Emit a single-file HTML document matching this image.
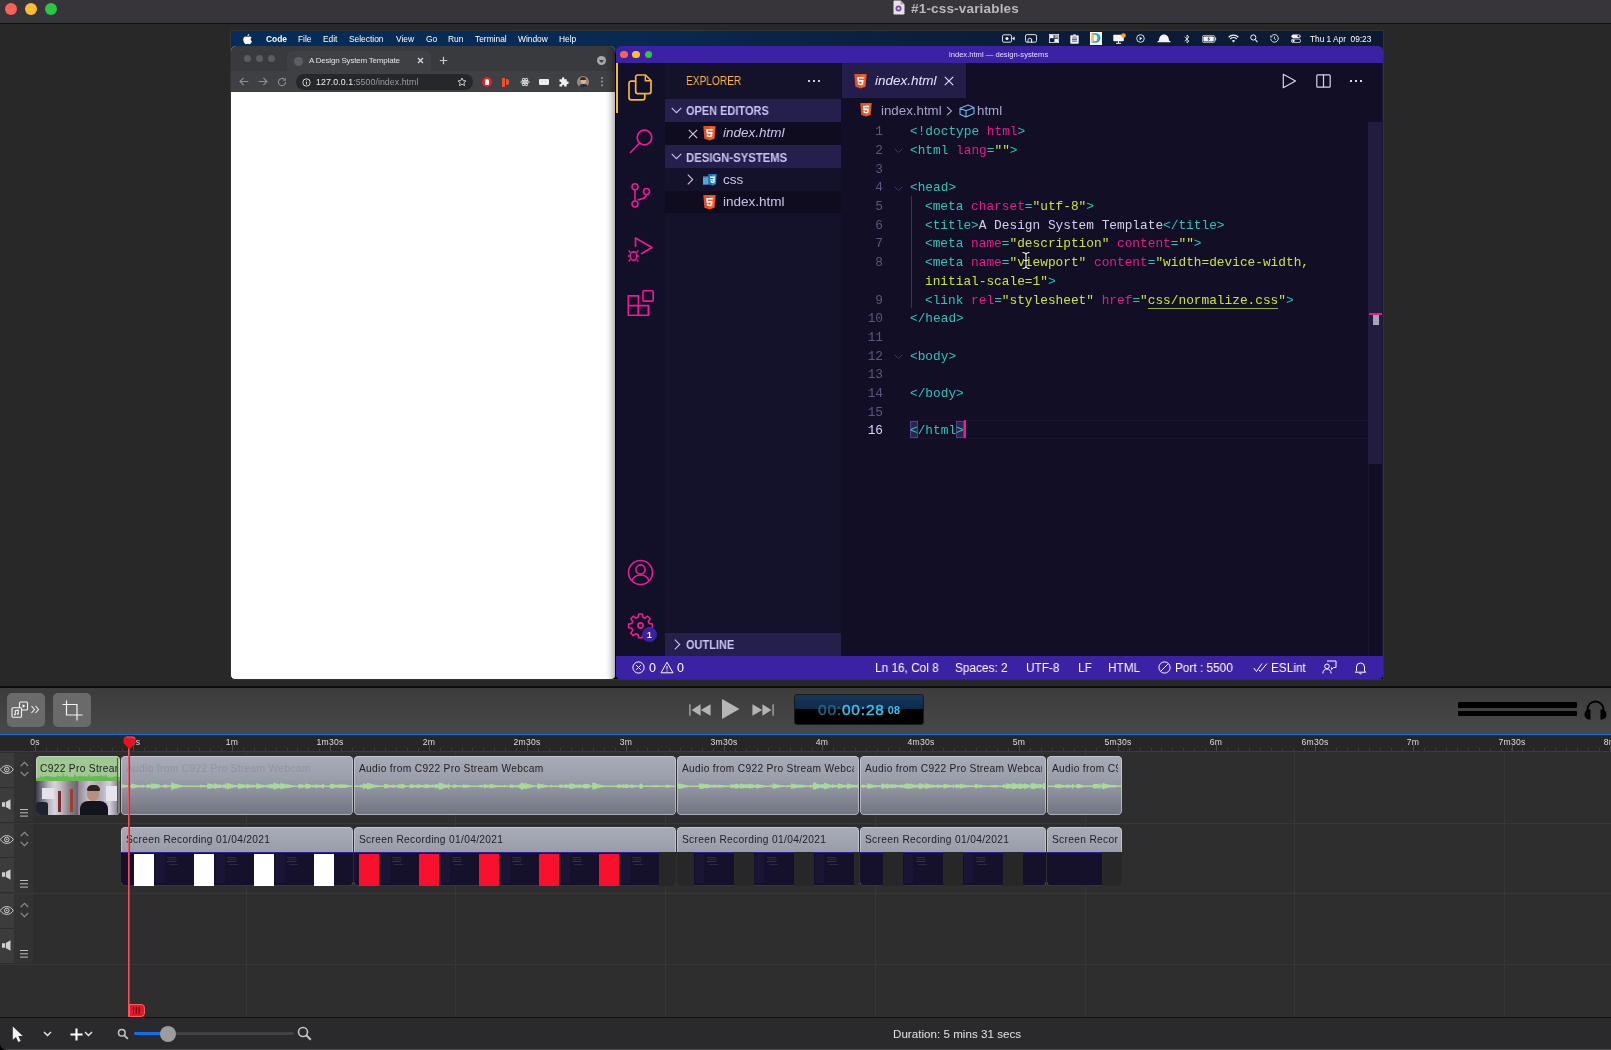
<!DOCTYPE html>
<html lang="en"><head><meta charset="utf-8"><title>#1-css-variables</title>
<style>
*{box-sizing:border-box;margin:0;padding:0}
html,body{width:1611px;height:1050px;overflow:hidden;background:#282828;font-family:"Liberation Sans",sans-serif;}
.a{position:absolute}
.t{position:absolute;white-space:pre;line-height:1;will-change:transform}
#titlebar{left:0;top:0;width:1611px;height:23px;background:#37343a}
#titleline{left:0;top:22.600px;width:1611px;height:1.300px;background:#101010}
.tl{width:12px;height:12px;border-radius:50%;top:3px}
#canvas{left:0;top:23.600px;width:1611px;height:662px;background:#282828}
/* screen */
#menubar{left:231px;top:31px;width:1152px;height:22px;background:linear-gradient(90deg,#052c5a 0%,#072a52 35%,#0a1f3c 60%,#0b1a30 100%)}
#menubar .t{color:#fff;font-size:8.400px;top:3.500px}
#chrome{left:231px;top:46px;width:384px;height:633px;background:#fff;border-radius:5px 5px 4px 4px;overflow:hidden}
#vscode{left:616px;top:46px;width:767px;height:633px;background:#110e25;border-radius:5px 5px 4px 4px;overflow:hidden}
.hd{font-size:12px;font-weight:bold;color:#c9c3f0;transform-origin:0 50%;transform:scaleX(.915)}
.row{font-size:13.5px;color:#c9c4ea}
.ln,.cd{font-family:"Liberation Mono",monospace;font-size:12.8px;line-height:18.69px}
.ln{width:30px;text-align:right}
.cd{color:#d3d0ee}
.ln,.cd{margin-top:2.700px}
.bc{font-size:13.300px;color:#a9a4cc}
.sb{font-size:12.500px;color:#fff;top:616px;transform-origin:0 50%;transform:scaleX(.945)}
/* lower */
#sep{left:0;top:686px;width:1611px;height:1.700px;background:#0c0c0c}
#toolbar{left:0;top:687.700px;width:1611px;height:46.300px;background:linear-gradient(180deg,#3c3c3c,#484848)}
#blueline{left:0;top:734px;width:1611px;height:1.6px;background:#0b6fe6}
#ruler{left:0;top:735px;width:1611px;height:17px;background:#262626}
#tracks{left:0;top:752px;width:1611px;height:265px;background:#2e2e2e}
#bottombar{left:0;top:1017px;width:1611px;height:33px;background:#2a292c;border-top:1px solid #111}
.rl{top:2.700px;font-size:8.600px;color:#dedede;text-align:center;letter-spacing:.200px}
.clip{border-radius:4.500px;background:linear-gradient(180deg,#a8acb7 0%,#9a9eaa 40%,#70747f 100%);overflow:hidden;box-shadow:inset 0 0 0 .8px rgba(215,218,225,.75)}
.ct{font-size:10.2px;color:#222224;letter-spacing:.33px;right:4.5px;overflow:hidden;height:13px}
</style></head><body>
<div id="titlebar" class="a">
<div class="a tl" style="left:5px;background:#fe5f57"></div>
<div class="a tl" style="left:25px;background:#febc2e"></div>
<div class="a tl" style="left:45px;background:#28c840"></div>
<svg class="a" style="left:892px;top:0px" width="14" height="16" viewBox="0 0 14 16"><path d="M1.5 1.5 a1 1 0 0 1 1-1 h6 l4 4 v9 a1 1 0 0 1-1 1 h-9 a1 1 0 0 1-1-1z" fill="#e4e4e6"/><path d="M8.5 .5 v4 h4z" fill="#aaa"/><circle cx="6.5" cy="8.5" r="3" fill="#7a4aa0"/><circle cx="6.5" cy="8.5" r="1.2" fill="#e8d8f0"/></svg>
<div class="t" style="left:911px;top:2px;font-size:13.500px;font-weight:bold;color:#bab8bd;letter-spacing:0.180px">#1-css-variables</div>
</div>
<div id="titleline" class="a"></div>
<div id="canvas" class="a"></div>
<div class="a" style="left:230px;top:30px;width:1154px;height:650px;background:#323232"></div><div class="a" style="left:231px;top:31px;width:1152px;height:648px;background:#000"></div>
<div id="menubar" class="a">
<svg class="a" style="left:12px;top:2.5px" width="9" height="11" viewBox="0 0 9 11"><path d="M6.2 0 C6.3 1 5.5 2.1 4.5 2.2 C4.3 1.2 5.2 .2 6.2 0z M4.5 2.8 C5.2 2.8 5.7 2.3 6.6 2.4 C7.3 2.4 8.1 2.8 8.6 3.6 C7.2 4.5 7.4 6.6 8.9 7.2 C8.5 8.4 7.6 10 6.7 10.2 C6 10.3 5.6 9.8 4.7 9.8 C3.8 9.8 3.4 10.3 2.7 10.2 C1.6 10 0.2 7.6 0.2 5.6 C0.2 3.6 1.5 2.5 2.7 2.5 C3.5 2.5 4 2.8 4.5 2.8z" fill="#fff"/></svg>
<div class="t" style="left:34.5px;font-weight:bold">Code</div>
<div class="t" style="left:66.5px">File</div>
<div class="t" style="left:91.5px">Edit</div>
<div class="t" style="left:118px">Selection</div>
<div class="t" style="left:164.5px">View</div>
<div class="t" style="left:194.5px">Go</div>
<div class="t" style="left:217px">Run</div>
<div class="t" style="left:243.5px">Terminal</div>
<div class="t" style="left:286.5px">Window</div>
<div class="t" style="left:328px">Help</div>
<div class="t" id="clock" style="left:1078.500px;font-size:8.300px;top:4px">Thu 1 Apr  09:23</div>
<svg class="a" style="left:770.5px;top:3px" width="13" height="9" viewBox="0 0 13 9"><rect x=".5" y=".8" width="9" height="7.400" rx="1.300" stroke="#f4f4f4" stroke-width=".9" fill="none"/><circle cx="5" cy="4.500" r="1.500" fill="#f4f4f4"/><path d="M10 4.500l2.600-2v4z" fill="#f4f4f4"/></svg>
<svg class="a" style="left:793.5px;top:3px" width="12" height="9" viewBox="0 0 12 9"><rect x=".5" y=".6" width="11" height="7.600" rx="1.500" stroke="#f4f4f4" stroke-width=".9" fill="none"/><path d="M3 8.500V6a1.800 1.800 0 0 1 3.600 0v2.500M6.600 8.500V5" stroke="#f4f4f4" stroke-width=".9" fill="none"/></svg>
<svg class="a" style="left:817.5px;top:3px" width="10" height="9" viewBox="0 0 10 9"><rect x=".4" y=".4" width="9.200" height="8.200" stroke="#f4f4f4" stroke-width=".8" fill="none"/><rect x="1" y="1" width="3.600" height="3.200" fill="#f4f4f4"/><rect x="5.400" y="4.800" width="3.600" height="3.200" fill="#f4f4f4"/><rect x="5.400" y="1" width="3.600" height="3.200" fill="#8fa0b8"/></svg>
<svg class="a" style="left:839px;top:2.500px" width="9" height="10" viewBox="0 0 9 10"><rect x=".3" y="1.300" width="8.400" height="8.400" rx=".8" fill="#f4f4f4"/><rect x="2.800" y=".2" width="3.400" height="2" rx=".5" fill="#f4f4f4" stroke="#0a2548" stroke-width=".4"/><path d="M2 4h5M2 5.600h5M2 7.200h5" stroke="#0a2548" stroke-width=".7"/></svg>
<div class="a" style="left:858.5px;top:.5px;width:12.500px;height:13px;background:#fbfbf6"></div>
<svg class="a" style="left:860px;top:2px" width="10" height="10" viewBox="0 0 10 10"><path d="M1.500 1h3a4 4 0 0 1 0 8h-3z" stroke="#1f9be8" stroke-width="1.700" fill="none"/><path d="M1.500 1v8" stroke="#f2c94c" stroke-width="1.700"/><path d="M6 2.300a4 4 0 0 1 0 5.400" stroke="#2bb673" stroke-width="1.500" fill="none"/></svg>
<svg class="a" style="left:882px;top:1.500px" width="14" height="11" viewBox="0 0 14 11"><rect x=".3" y="1.800" width="10.500" height="6.500" rx=".8" fill="#f4f4f4"/><path d="M5.500 8v2M3 10.300h5" stroke="#f4f4f4" stroke-width="1"/><circle cx="10.500" cy="2.500" r="2.300" fill="#f5a623"/></svg>
<svg class="a" style="left:904.5px;top:3px" width="9" height="9" viewBox="0 0 9 9"><circle cx="4.500" cy="4.500" r="3.800" stroke="#f4f4f4" stroke-width=".9" fill="none"/><path d="M3.600 2.800l2.700 1.700-2.700 1.700z" fill="#f4f4f4"/></svg>
<svg class="a" style="left:925.5px;top:3px" width="14" height="9" viewBox="0 0 14 9"><path d="M.3 8.200c0-1 .8-1.500 1.700-1.500C2 3 4 .5 7 .5s5 2.500 5 6.200c.9 0 1.700.5 1.700 1.500z" fill="#f4f4f4"/></svg>
<svg class="a" style="left:953.3px;top:2.500px" width="6" height="10" viewBox="0 0 6 10"><path d="M.6 2.700l4.400 4.400L3 9V1l2 1.900L.6 7.300" stroke="#f4f4f4" stroke-width=".8" fill="none" stroke-linejoin="round"/></svg>
<svg class="a" style="left:971.3px;top:3.500px" width="15" height="8" viewBox="0 0 15 8"><rect x=".4" y=".4" width="12.400" height="7.200" rx="1.600" stroke="#c9d0da" stroke-width=".8" fill="none"/><rect x="1.400" y="1.400" width="10.400" height="5.200" rx=".8" fill="#f4f4f4"/><path d="M13.600 2.600v2.800" stroke="#c9d0da" stroke-width="1.100"/><path d="M7.400 1.500L5.300 4.300h1.500L6 6.500l2.200-2.800H6.700z" fill="#0a2548"/></svg>
<svg class="a" style="left:996.8px;top:3px" width="11" height="9" viewBox="0 0 11 9"><path d="M.6 3.200a7 7 0 0 1 9.800 0M2.300 5a4.600 4.600 0 0 1 6.400 0" stroke="#f4f4f4" stroke-width="1.200" fill="none"/><path d="M3.900 6.700a2.300 2.300 0 0 1 3.200 0L5.500 8.400z" fill="#f4f4f4"/></svg>
<svg class="a" style="left:1018.8px;top:3px" width="8" height="9" viewBox="0 0 8 9"><circle cx="3.300" cy="3.500" r="2.600" stroke="#f4f4f4" stroke-width="1" fill="none"/><path d="M5.200 5.500l2.300 2.600" stroke="#f4f4f4" stroke-width="1.100"/></svg>
<svg class="a" style="left:1038.8px;top:3px" width="9" height="9" viewBox="0 0 9 9"><path d="M1.300 2.300A3.800 3.800 0 1 1 .7 4.800" stroke="#f4f4f4" stroke-width=".9" fill="none"/><path d="M4.500 2.500v2.300l1.300.9" stroke="#f4f4f4" stroke-width=".8" fill="none"/><path d="M.2 1.300l.5 2 1.900-.6" stroke="#f4f4f4" stroke-width=".7" fill="none"/></svg>
<svg class="a" style="left:1059.8px;top:3px" width="10" height="9" viewBox="0 0 10 9"><rect x=".4" y=".4" width="9.200" height="3.600" rx="1.800" fill="#f4f4f4"/><circle cx="7.500" cy="2.200" r="1.100" fill="#0a2548"/><rect x=".4" y="5" width="9.200" height="3.600" rx="1.800" stroke="#f4f4f4" stroke-width=".8" fill="none"/><circle cx="2.500" cy="6.800" r="1.200" fill="#f4f4f4"/></svg>

</div>
<div id="chrome" class="a">
<div class="a" style="left:0;top:0;width:384px;height:25px;background:#383a3e"></div>
<div class="a" style="left:0;top:25px;width:384px;height:21px;background:#3e4044"></div>
<div class="a" style="left:56px;top:5px;width:144px;height:21px;background:#3e4044;border-radius:5px 5px 0 0"></div>
<div class="a" style="left:13px;top:9px;width:7px;height:7px;border-radius:50%;background:#5a5c60"></div>
<div class="a" style="left:25px;top:9px;width:7px;height:7px;border-radius:50%;background:#5a5c60"></div>
<div class="a" style="left:37px;top:9px;width:7px;height:7px;border-radius:50%;background:#5a5c60"></div>
<div class="a" style="left:63px;top:10.5px;width:9px;height:9px;border-radius:50%;background:#5b5d61"></div>
<div class="t" style="left:77.500px;top:10.700px;font-size:8px;letter-spacing:-0.200px;color:#e3e3e5">A Design System Template</div>
<svg class="a" style="left:186px;top:11px" width="7" height="7" viewBox="0 0 7 7"><path d="M1 1l5 5M6 1l-5 5" stroke="#e0e0e0" stroke-width="1.1" fill="none"/></svg>
<svg class="a" style="left:208px;top:10px" width="9" height="9" viewBox="0 0 9 9"><path d="M4.5 .8v7.4M.8 4.5h7.4" stroke="#c8c9cc" stroke-width="1.2" fill="none"/></svg>
<div class="a" style="left:366px;top:10px;width:9px;height:9px;border-radius:50%;background:#a6a8ab"></div>
<svg class="a" style="left:368px;top:13.5px" width="5" height="3" viewBox="0 0 5 3"><path d="M0 0h5l-2.5 3z" fill="#383a3e"/></svg>
<!-- toolbar -->
<svg class="a" style="left:8px;top:31px" width="10" height="9" viewBox="0 0 10 9"><path d="M9.3 4.5H1.2M4.6 .9L1 4.5l3.6 3.6" stroke="#8d8f93" stroke-width="1.1" fill="none"/></svg>
<svg class="a" style="left:27px;top:31px" width="10" height="9" viewBox="0 0 10 9"><path d="M.7 4.5h8.1M5.4 .9L9 4.5 5.4 8.1" stroke="#8d8f93" stroke-width="1.1" fill="none"/></svg>
<svg class="a" style="left:46px;top:30.5px" width="10" height="10" viewBox="0 0 10 10"><path d="M8.6 5a3.6 3.6 0 1 1-1.1-2.6" stroke="#8d8f93" stroke-width="1.1" fill="none"/><path d="M8.9 .8v3H5.9z" fill="#8d8f93"/></svg>
<div class="a" style="left:65px;top:28px;width:177px;height:16px;border-radius:8px;background:#26272a"></div>
<svg class="a" style="left:71px;top:31.5px" width="9" height="9" viewBox="0 0 9 9"><circle cx="4.5" cy="4.5" r="3.7" stroke="#e6e6e6" stroke-width=".9" fill="none"/><path d="M4.5 4v2.6M4.5 2.4v.9" stroke="#e6e6e6" stroke-width=".9"/></svg>
<div class="t" style="left:85px;top:31.800px;font-size:8.800px;color:#f0f0f0;letter-spacing:0.050px">127.0.0.1<span style="color:#9a9ca0">:5500/index.html</span></div>
<svg class="a" style="left:226px;top:31px" width="10" height="10" viewBox="0 0 10 10"><path d="M5 1l1.2 2.6 2.8.3-2.1 1.9.6 2.8L5 7.2 2.5 8.6l.6-2.8L1 3.9l2.8-.3z" stroke="#d8d8d8" stroke-width=".9" fill="none" stroke-linejoin="round"/></svg>
<div class="a" style="left:251px;top:31px;width:10px;height:10px;border-radius:50%;background:#e8202a"></div>
<div class="a" style="left:254px;top:33px;width:4px;height:6px;border-radius:2px 2px 1px 1px;background:#fff"></div>
<div class="a" style="left:271px;top:31.5px;width:2.5px;height:9px;background:#f0502a"></div>
<div class="a" style="left:275px;top:33px;width:3px;height:6px;background:#f0502a;border-radius:0 2px 2px 0"></div>
<svg class="a" style="left:289px;top:31px" width="10" height="10" viewBox="0 0 10 10"><circle cx="5" cy="5" r="1" fill="#e8e8e8"/><ellipse cx="5" cy="5" rx="4.3" ry="1.7" stroke="#e8e8e8" stroke-width=".8" fill="none"/><ellipse cx="5" cy="5" rx="4.3" ry="1.7" stroke="#e8e8e8" stroke-width=".8" fill="none" transform="rotate(60 5 5)"/><ellipse cx="5" cy="5" rx="4.3" ry="1.7" stroke="#e8e8e8" stroke-width=".8" fill="none" transform="rotate(120 5 5)"/></svg>
<div class="a" style="left:308px;top:33px;width:10px;height:6px;border-radius:1px;background:#ededed"></div>
<svg class="a" style="left:327px;top:30.5px" width="11" height="11" viewBox="0 0 11 11"><path d="M4 1.5a1.2 1.2 0 0 1 2.4 0v.8h2.3v2.3h.8a1.2 1.2 0 0 1 0 2.4h-.8v2.6H6.3v-.7a1.1 1.1 0 0 0-2.2 0v.7H1.5V7.2h.7a1.2 1.2 0 0 0 0-2.4h-.7V2.3H4z" fill="#f0f0f0"/></svg>
<div class="a" style="left:346px;top:30px;width:12px;height:12px;border-radius:50%;background:#9c8a78;overflow:hidden"><div class="a" style="left:3.5px;top:2px;width:5px;height:6px;border-radius:50%;background:#d9b49a"></div><div class="a" style="left:3px;top:1px;width:6px;height:3px;border-radius:3px 3px 0 0;background:#3a2a22"></div><div class="a" style="left:1.5px;top:8px;width:9px;height:6px;border-radius:4px 4px 0 0;background:#2b2f3c"></div></div>
<div class="a" style="left:370.300px;top:31.200px;width:2px;height:2px;border-radius:50%;background:#9a9c9f;box-shadow:0 3.600px 0 #9a9c9f,0 7.200px 0 #9a9c9f"></div>
<div class="a" style="left:374px;top:0px;width:10px;height:633px;background:linear-gradient(90deg,rgba(0,0,0,0),rgba(0,0,0,.06) 40%,rgba(0,0,0,.28))"></div>
</div>
<div id="vscode" class="a">
<div class="a" style="left:0;top:0;width:767px;height:17px;background:#3b21a4"></div>
<div class="a" style="left:4.2px;top:4.8px;width:7.6px;height:7.6px;border-radius:50%;background:#fe5f57"></div>
<div class="a" style="left:16.2px;top:4.8px;width:7.6px;height:7.6px;border-radius:50%;background:#febc2e"></div>
<div class="a" style="left:28.5px;top:4.8px;width:7.6px;height:7.6px;border-radius:50%;background:#28c840"></div>
<div class="t" id="vstitle" style="left:333px;top:4.5px;font-size:7.6px;color:#e4dcff">index.html — design-systems</div>
<!-- activity bar -->
<div class="a" style="left:0;top:17px;width:49px;height:593px;background:#120f28"></div>
<div class="a" style="left:0;top:17px;width:1.900px;height:49.600px;background:#f5b63a"></div>
<svg class="a" style="left:12px;top:28px" width="24" height="27" viewBox="0 0 24 27"><g stroke="#f5b63a" stroke-width="1.700" fill="none"><path d="M7.700 7.200H3a2 2 0 0 0-2 2V23.800a2 2 0 0 0 2 2H14.800a2 2 0 0 0 2-2V19.600"/><path d="M9.700 1H17.500l5.500 5.500V17.600a2 2 0 0 1-2 2H9.700a2 2 0 0 1-2-2V3a2 2 0 0 1 2-2z"/><path d="M17.300 1.300V6.700H22.700" stroke-width="1.400"/></g></svg>
<svg class="a" style="left:12px;top:82px" width="26" height="26" viewBox="0 0 26 26"><circle cx="16.5" cy="9.5" r="7.3" stroke="#ee1a93" stroke-width="1.7" fill="none"/><path d="M11.5 15L2 25" stroke="#ee1a93" stroke-width="1.7" fill="none"/></svg>
<svg class="a" style="left:14px;top:136px" width="22" height="27" viewBox="0 0 22 27"><circle cx="5" cy="4.8" r="3" stroke="#ee1a93" stroke-width="1.6" fill="none"/><circle cx="5" cy="22" r="3" stroke="#ee1a93" stroke-width="1.6" fill="none"/><circle cx="16.5" cy="9.5" r="3" stroke="#ee1a93" stroke-width="1.6" fill="none"/><path d="M5 7.8V19M16.5 12.5c0 4-5 4.5-9 5.5" stroke="#ee1a93" stroke-width="1.6" fill="none"/></svg>
<svg class="a" style="left:11px;top:190px" width="27" height="27" viewBox="0 0 27 27"><path d="M8.5 11V2l16.5 9.5-11 6.5" stroke="#ee1a93" stroke-width="1.7" fill="none" stroke-linejoin="round"/><ellipse cx="6.5" cy="20" rx="3.3" ry="4.2" stroke="#ee1a93" stroke-width="1.5" fill="none"/><path d="M3.5 16.5L1.5 14.5M9.5 16.5l2-2M3.2 20H.8M9.8 20h2.4M3.5 23.5l-2 2M9.5 23.5l2 2M4.5 16h4" stroke="#ee1a93" stroke-width="1.4" fill="none"/></svg>
<svg class="a" style="left:11px;top:243.500px" width="28" height="27" viewBox="0 0 28 27"><g stroke="#ee1a93" stroke-width="1.600" fill="none"><path d="M1.300 5.900h10.100v19.400H1.300zM1.300 15.600h20.200v9.700H11.400"/><path d="M11.400 15.600v9.700M21.500 15.600v9.700"/><rect x="15.900" y=".8" width="10.300" height="10.300" rx="1.200"/></g></svg>
<svg class="a" style="left:11px;top:513px" width="27" height="27" viewBox="0 0 27 27"><circle cx="13.5" cy="13.5" r="12" stroke="#ee1a93" stroke-width="1.6" fill="none"/><circle cx="13.5" cy="10.5" r="4.6" stroke="#ee1a93" stroke-width="1.6" fill="none"/><path d="M5 22c1.5-4.5 5-6 8.500-6s7 1.500 8.500 6" stroke="#ee1a93" stroke-width="1.6" fill="none"/></svg>
<svg class="a" style="left:11px;top:566px" width="27" height="27" viewBox="0 0 27 27"><g stroke="#ee1a93" stroke-width="1.6" fill="none"><circle cx="13.500" cy="13.500" r="2.600"/><path d="M11.700 2h3.600l.6 3.200 2.100.9 2.700-1.900 2.500 2.500-1.900 2.700.9 2.100 3.200.6v3.600l-3.200.6-.9 2.100 1.900 2.700-2.500 2.500-2.700-1.900-2.100.9-.6 3.200h-3.600l-.6-3.200-2.100-.9-2.700 1.900-2.500-2.500 1.900-2.700-.9-2.100L1.600 15.700v-3.600l3.200-.6.900-2.100-1.900-2.700 2.500-2.500 2.700 1.900 2.100-.9z" stroke-linejoin="round"/></g></svg>
<div class="a" style="left:25.5px;top:581.3px;width:15px;height:15px;border-radius:50%;background:#3b21a4"></div>
<div class="t" style="left:30.5px;top:584.5px;font-size:8.5px;font-weight:bold;color:#fff">1</div>
<!-- sidebar -->
<div class="a" style="left:49px;top:17px;width:176px;height:593px;background:#14112b"></div>
<div class="t" id="explorer" style="left:70px;top:29px;font-size:12.300px;transform-origin:0 50%;transform:scaleX(.825);color:#f5b63a">EXPLORER</div>
<div class="a" style="left:192px;top:34px;width:2px;height:2px;background:#c9c3f0;box-shadow:5px 0 0 #c9c3f0,10px 0 0 #c9c3f0"></div>
<div class="a" style="left:49px;top:53.2px;width:176px;height:22.5px;background:#251f4b"></div>
<svg class="a" style="left:55px;top:61px" width="11" height="7" viewBox="0 0 11 7"><path d="M.7 .8l4.8 4.9L10.3 .8" stroke="#c9c3f0" stroke-width="1.1" fill="none"/></svg>
<div class="t hd" style="left:70px;top:58.5px">OPEN EDITORS</div>
<div class="a" style="left:49px;top:75.7px;width:176px;height:23.3px;background:#0f0c20"></div>
<svg class="a" style="left:71.5px;top:82.5px" width="10" height="10" viewBox="0 0 10 10"><path d="M.8 .8l8.400 8.400M9.200 .8L.8 9.200" stroke="#d0cbee" stroke-width="1.1" fill="none"/></svg>
<svg class="a" style="left:87px;top:80px" width="13" height="15" viewBox="0 0 13 15"><path d="M.3 0h12.4l-1.1 12.8L6.5 14.6 1.4 12.8z" fill="#e44d26"/><path d="M6.5 1v12.5l4.2-1.3L11.6 1z" fill="#f16529"/><path d="M3.2 2.9h6.6l-.15 1.7H5l.12 1.4h4.4l-.4 4.5-2.6.85-2.6-.85-.18-2.1h1.6l.1 1 1.1.35 1.1-.35.13-1.7H3.6z" fill="#fff"/></svg>
<div class="t row" style="left:107.3px;top:80px;font-style:italic">index.html</div>
<div class="a" style="left:49px;top:99px;width:176px;height:22.800px;background:#251f4b"></div>
<svg class="a" style="left:55px;top:107px" width="11" height="7" viewBox="0 0 11 7"><path d="M.7 .8l4.8 4.9L10.3 .8" stroke="#c9c3f0" stroke-width="1.1" fill="none"/></svg>
<div class="t hd" style="left:70px;top:105.5px;transform:scaleX(.943)">DESIGN-SYSTEMS</div>
<svg class="a" style="left:70.5px;top:127.5px" width="7" height="11" viewBox="0 0 7 11"><path d="M.8 .7l4.9 4.8L.8 10.3" stroke="#c9c3f0" stroke-width="1.1" fill="none"/></svg>
<svg class="a" style="left:86.5px;top:126.8px" width="15" height="14" viewBox="0 0 15 14"><path d="M0 3.2h6l1 1.3v7H0z" fill="#3d84b8"/><path d="M0 4.8h5v6.7H0z" fill="#5ba3d4"/><path d="M5.2 1h8.6l-.8 10.3-3.5 1.4-3.5-1.4z" fill="#1b73ba"/><path d="M9.5 1.8v10.1l2.8-1.1.7-9z" fill="#2a9ae0"/><path d="M7 3.400h5l-.5 6-1.900.7-1.900-.7-.1-1.500h1.200l.05.7.75.250.75-.250.1-1.200H7.300l-.1-1.200h3.300l.1-1.100H7.100z" fill="#fff"/></svg>
<div class="t row" style="left:107.3px;top:126.9px">css</div>
<div class="a" style="left:49px;top:144.6px;width:176px;height:22.400px;background:#0f0c20"></div>
<svg class="a" style="left:87px;top:148.5px" width="13" height="15" viewBox="0 0 13 15"><path d="M.3 0h12.4l-1.1 12.8L6.5 14.6 1.4 12.8z" fill="#e44d26"/><path d="M6.5 1v12.5l4.2-1.3L11.6 1z" fill="#f16529"/><path d="M3.2 2.9h6.6l-.15 1.7H5l.12 1.4h4.4l-.4 4.5-2.6.85-2.6-.85-.18-2.1h1.6l.1 1 1.1.35 1.1-.35.13-1.7H3.6z" fill="#fff"/></svg>
<div class="t row" style="left:107.3px;top:149px">index.html</div>
<div class="a" style="left:49px;top:587px;width:176px;height:23px;background:#251f4b"></div>
<svg class="a" style="left:57.5px;top:592.5px" width="7" height="11" viewBox="0 0 7 11"><path d="M.8 .7l4.9 4.8L.8 10.3" stroke="#c9c3f0" stroke-width="1.1" fill="none"/></svg>
<div class="t hd" style="left:70px;top:592.5px">OUTLINE</div>
<div class="a" style="left:225px;top:17px;width:542px;height:593px;background:#110e26"></div>
<div class="a" style="left:226px;top:17px;width:124px;height:35px;background:#231d49"></div>
<svg class="a" style="left:238px;top:27.500px" width="13" height="15" viewBox="0 0 13 15"><path d="M.3 0h12.4l-1.1 12.8L6.5 14.6 1.4 12.8z" fill="#e44d26"/><path d="M6.5 1v12.5l4.2-1.3L11.6 1z" fill="#f16529"/><path d="M3.2 2.9h6.6l-.15 1.7H5l.12 1.4h4.4l-.4 4.5-2.6.85-2.6-.85-.18-2.1h1.6l.1 1 1.1.35 1.1-.35.13-1.7H3.6z" fill="#fff"/></svg>
<div class="t" id="tabtxt" style="left:259px;top:28px;font-size:13.5px;font-style:italic;color:#e6e2ff">index.html</div>
<svg class="a" style="left:327.5px;top:29.5px" width="10" height="10" viewBox="0 0 10 10"><path d="M.8 .8l8.400 8.400M9.200 .8L.8 9.200" stroke="#e6e2ff" stroke-width="1.1" fill="none"/></svg>
<svg class="a" style="left:666px;top:27px" width="15" height="16" viewBox="0 0 15 16"><path d="M1.300 1.300L13.500 8 1.300 14.700z" stroke="#d8d4f4" stroke-width="1.200" fill="none" stroke-linejoin="round"/></svg>
<svg class="a" style="left:699.5px;top:27.5px" width="15" height="14" viewBox="0 0 15 14"><rect x=".8" y=".8" width="13.400" height="12.400" rx="1" stroke="#d8d4f4" stroke-width="1.200" fill="none"/><path d="M7.500 .8v12.400" stroke="#d8d4f4" stroke-width="1.200"/></svg>
<div class="a" style="left:734px;top:34px;width:2px;height:2px;background:#d8d4f4;box-shadow:5px 0 0 #d8d4f4,10px 0 0 #d8d4f4"></div>
<!-- breadcrumb -->
<svg class="a" style="left:244px;top:56.5px" width="12" height="14" viewBox="0 0 13 15"><path d="M.3 0h12.4l-1.1 12.8L6.5 14.6 1.4 12.8z" fill="#e44d26"/><path d="M6.5 1v12.5l4.2-1.3L11.6 1z" fill="#f16529"/><path d="M3.2 2.9h6.6l-.15 1.7H5l.12 1.4h4.4l-.4 4.5-2.6.85-2.6-.85-.18-2.1h1.6l.1 1 1.1.35 1.1-.35.13-1.7H3.6z" fill="#fff"/></svg>
<div class="t bc" style="left:264.5px;top:57.5px">index.html</div>
<svg class="a" style="left:330px;top:59.5px" width="7" height="10" viewBox="0 0 7 10"><path d="M1 .8l4.500 4.200L1 9.200" stroke="#a9a4cc" stroke-width="1.100" fill="none"/></svg>
<svg class="a" style="left:343px;top:57.5px" width="16" height="14" viewBox="0 0 16 14"><path d="M1 4.200L9 1l6 2.500v6L7 13 1 10.200zM1 4.200l6 2.600 8-3.300M7 6.800V13" stroke="#6fb7ec" stroke-width="1.100" fill="none" stroke-linejoin="round"/></svg>
<div class="t bc" style="left:361px;top:57.5px">html</div>
<!-- scrollbar area -->
<div class="a" style="left:752px;top:75.5px;width:14px;height:342px;background:#221d40"></div>
<div class="a" style="left:765.5px;top:17px;width:1.5px;height:593px;background:#1c1838"></div>
<div class="a" style="left:753px;top:267px;width:13px;height:1.500px;background:#e8198b"></div>
<div class="a" style="left:757px;top:268.5px;width:6px;height:10px;background:#a7a4b8"></div>
<div class="a" style="left:752px;top:417px;width:1px;height:193px;background:#1b1736"></div>
<!-- current line -->
<div class="a" style="left:289px;top:373.7px;width:463px;height:19px;border-top:1px solid #19152f;border-bottom:1px solid #19152f"></div>
<div class="a" style="left:293.5px;top:374.5px;width:8px;height:17.500px;background:#2a2452;border:1px solid #4b4580"></div>
<div class="a" style="left:340px;top:374.5px;width:8px;height:17.500px;background:#2a2452;border:1px solid #4b4580"></div>
<div class="a" style="left:348.3px;top:374.3px;width:1.700px;height:18px;background:#f01a92"></div>
<!-- indent guide -->
<div class="a" style="left:294.5px;top:150px;width:1px;height:112px;background:#38335e"></div>
<svg class="a" style="left:278px;top:102.100px" width="9" height="6" viewBox="0 0 9 6"><path d="M.7 .7l3.800 3.800L8.300 .7" stroke="#3d3866" stroke-width="1" fill="none"/></svg><svg class="a" style="left:278px;top:139.500px" width="9" height="6" viewBox="0 0 9 6"><path d="M.7 .7l3.800 3.800L8.300 .7" stroke="#3d3866" stroke-width="1" fill="none"/></svg><svg class="a" style="left:278px;top:307.700px" width="9" height="6" viewBox="0 0 9 6"><path d="M.7 .7l3.800 3.800L8.300 .7" stroke="#3d3866" stroke-width="1" fill="none"/></svg>
<div class="t ln" style="left:237px;top:74.65px;color:#5b567f">1</div>
<div class="t cd" style="left:294.0px;top:74.65px"><span style="color:#2cc5b5">&lt;!doctype </span><span style="color:#e8198b">html</span><span style="color:#2cc5b5">&gt;</span></div>
<div class="t ln" style="left:237px;top:93.34px;color:#5b567f">2</div>
<div class="t cd" style="left:294.0px;top:93.34px"><span style="color:#2cc5b5">&lt;html </span><span style="color:#e8198b">lang</span><span style="color:#2cc5b5">=</span><span style="color:#c7e737">""</span><span style="color:#2cc5b5">&gt;</span></div>
<div class="t ln" style="left:237px;top:112.03px;color:#5b567f">3</div>
<div class="t ln" style="left:237px;top:130.72px;color:#5b567f">4</div>
<div class="t cd" style="left:294.0px;top:130.72px"><span style="color:#2cc5b5">&lt;head&gt;</span></div>
<div class="t ln" style="left:237px;top:149.41px;color:#5b567f">5</div>
<div class="t cd" style="left:309.36px;top:149.41px"><span style="color:#2cc5b5">&lt;meta </span><span style="color:#e8198b">charset</span><span style="color:#2cc5b5">=</span><span style="color:#c7e737">"utf-8"</span><span style="color:#2cc5b5">&gt;</span></div>
<div class="t ln" style="left:237px;top:168.1px;color:#5b567f">6</div>
<div class="t cd" style="left:309.36px;top:168.1px"><span style="color:#2cc5b5">&lt;title&gt;</span><span style="color:#d3d0ee">A Design System Template</span><span style="color:#2cc5b5">&lt;/title&gt;</span></div>
<div class="t ln" style="left:237px;top:186.79px;color:#5b567f">7</div>
<div class="t cd" style="left:309.36px;top:186.79px"><span style="color:#2cc5b5">&lt;meta </span><span style="color:#e8198b">name</span><span style="color:#2cc5b5">=</span><span style="color:#c7e737">"description"</span> <span style="color:#e8198b">content</span><span style="color:#2cc5b5">=</span><span style="color:#c7e737">""</span><span style="color:#2cc5b5">&gt;</span></div>
<div class="t ln" style="left:237px;top:205.48px;color:#5b567f">8</div>
<div class="t cd" style="left:309.36px;top:205.48px"><span style="color:#2cc5b5">&lt;meta </span><span style="color:#e8198b">name</span><span style="color:#2cc5b5">=</span><span style="color:#c7e737">"viewport"</span> <span style="color:#e8198b">content</span><span style="color:#2cc5b5">=</span><span style="color:#c7e737">"width=device-width,</span></div>
<div class="t cd" style="left:309.36px;top:224.17px"><span style="color:#c7e737">initial-scale=1"</span><span style="color:#2cc5b5">&gt;</span></div>
<div class="t ln" style="left:237px;top:242.86px;color:#5b567f">9</div>
<div class="t cd" style="left:309.36px;top:242.86px"><span style="color:#2cc5b5">&lt;link </span><span style="color:#e8198b">rel</span><span style="color:#2cc5b5">=</span><span style="color:#c7e737">"stylesheet"</span> <span style="color:#e8198b">href</span><span style="color:#2cc5b5">=</span><span style="color:#c7e737">"</span><span style="color:#c7e737;border-bottom:1.2px solid #8fb52a;padding-bottom:0px">css/normalize.css</span><span style="color:#c7e737">"</span><span style="color:#2cc5b5">&gt;</span></div>
<div class="t ln" style="left:237px;top:261.55px;color:#5b567f">10</div>
<div class="t cd" style="left:294.0px;top:261.55px"><span style="color:#2cc5b5">&lt;/head&gt;</span></div>
<div class="t ln" style="left:237px;top:280.24px;color:#5b567f">11</div>
<div class="t ln" style="left:237px;top:298.93px;color:#5b567f">12</div>
<div class="t cd" style="left:294.0px;top:298.93px"><span style="color:#2cc5b5">&lt;body&gt;</span></div>
<div class="t ln" style="left:237px;top:317.62px;color:#5b567f">13</div>
<div class="t ln" style="left:237px;top:336.31px;color:#5b567f">14</div>
<div class="t cd" style="left:294.0px;top:336.31px"><span style="color:#2cc5b5">&lt;/body&gt;</span></div>
<div class="t ln" style="left:237px;top:355.0px;color:#5b567f">15</div>
<div class="t ln" style="left:237px;top:373.69px;color:#d8d4ff">16</div>
<div class="t cd" style="left:294.0px;top:373.69px"><span style="color:#2cc5b5">&lt;/html&gt;</span></div>

<!-- mouse ibeam -->
<svg class="a" style="left:404.5px;top:204.5px" width="10" height="19" viewBox="0 0 10 19"><path d="M1.500 1.500C3.500 1.500 5 2.200 5 4v11c0 1.800-1.500 2.500-3.500 2.500M8.500 1.500C6.500 1.500 5 2.200 5 4M5 15c0 1.800 1.500 2.500 3.500 2.500M3.300 9.500h3.400" stroke="#000" stroke-width="2.600" fill="none"/><path d="M1.500 1.500C3.500 1.500 5 2.200 5 4v11c0 1.800-1.500 2.500-3.500 2.500M8.500 1.500C6.500 1.500 5 2.200 5 4M5 15c0 1.800 1.500 2.500 3.500 2.500M3.300 9.500h3.400" stroke="#fff" stroke-width="1.100" fill="none"/></svg>

<div class="a" style="left:0;top:610px;width:767px;height:23px;background:#3b21a4"></div>
<svg class="a" style="left:15.5px;top:615px" width="13" height="13" viewBox="0 0 13 13"><circle cx="6.500" cy="6.500" r="5.600" stroke="#fff" stroke-width="1" fill="none"/><path d="M4.200 4.200l4.600 4.600M8.800 4.200L4.200 8.800" stroke="#fff" stroke-width="1"/></svg>
<div class="t sb" style="left:32.5px">0</div>
<svg class="a" style="left:44px;top:615px" width="14" height="13" viewBox="0 0 14 13"><path d="M7 1.200L13 11.800H1z" stroke="#fff" stroke-width="1" fill="none" stroke-linejoin="round"/><path d="M7 5v3.500M7 9.500v1.200" stroke="#fff" stroke-width="1"/></svg>
<div class="t sb" style="left:60.5px">0</div>
<div class="t sb" style="left:259px">Ln 16, Col 8</div>
<div class="t sb" style="left:339px">Spaces: 2</div>
<div class="t sb" style="left:409.5px">UTF-8</div>
<div class="t sb" style="left:462px">LF</div>
<div class="t sb" style="left:491.5px">HTML</div>
<svg class="a" style="left:542px;top:615px" width="13" height="13" viewBox="0 0 13 13"><circle cx="6.500" cy="6.500" r="5.600" stroke="#fff" stroke-width="1" fill="none"/><path d="M2.800 10.200L10.200 2.800" stroke="#fff" stroke-width="1"/></svg>
<div class="t sb" style="left:559px">Port : 5500</div>
<svg class="a" style="left:636.5px;top:616px" width="15" height="11" viewBox="0 0 15 11"><path d="M.8 6l2.700 3.500L9 1.500M6 8l1.300 1.500L14 1.500" stroke="#fff" stroke-width="1" fill="none"/></svg>
<div class="t sb" style="left:654.5px">ESLint</div>
<svg class="a" style="left:705.5px;top:614px" width="15" height="14" viewBox="0 0 15 14"><path d="M5 1h9v6.500h-2.500l-2 2V7.500" stroke="#fff" stroke-width="1" fill="none"/><circle cx="5" cy="6.300" r="2.300" stroke="#fff" stroke-width="1" fill="none"/><path d="M.8 13.500c.3-3 2-4.500 4.200-4.500s3.900 1.500 4.200 4.500" stroke="#fff" stroke-width="1" fill="none"/></svg>
<svg class="a" style="left:738px;top:614.5px" width="13" height="14" viewBox="0 0 13 14"><path d="M2.500 10V6a4 4 0 0 1 8 0v4l1.200 1.200H1.300z" stroke="#fff" stroke-width="1" fill="none" stroke-linejoin="round"/><path d="M5.300 12a1.300 1.300 0 0 0 2.400 0" stroke="#fff" stroke-width="1" fill="none"/></svg>

</div>
<div id="sep" class="a"></div>
<div id="toolbar" class="a">
<div class="a" style="left:7px;top:5px;width:38px;height:34px;border-radius:5px;background:#6a6a6a"></div>
<div class="a" style="left:53px;top:5px;width:38px;height:34px;border-radius:5px;background:#6a6a6a"></div>
<svg class="a" style="left:11px;top:13px" width="30" height="18" viewBox="0 0 30 18"><g stroke="#f2f2f2" stroke-width="1.1" fill="none"><rect x="8.5" y="1" width="8" height="8" rx="1"/><rect x="1" y="6.700" width="9.500" height="9.500" rx="1" fill="#6a6a6a"/><path d="M4.300 13.500V9.800l3-.7v3.700"/><path d="M20.500 5l3 3.500-3 3.500M24.500 5l3 3.500-3 3.500"/></g><path d="M11.500 3.300l3 1.700-3 1.700z" fill="#f2f2f2"/><circle cx="3.700" cy="13.600" r=".9" fill="#f2f2f2"/><circle cx="6.700" cy="12.900" r=".9" fill="#f2f2f2"/></svg>
<svg class="a" style="left:62px;top:12px" width="21" height="21" viewBox="0 0 21 21"><path d="M4.500 .5v14.500h16M.5 4.500h14.500v16" stroke="#f2f2f2" stroke-width="1.200" fill="none"/></svg>
<svg class="a" style="left:688.500px;top:16px" width="22" height="12" viewBox="0 0 22 12"><path d="M.3 .3h1.200v11.400H.3z" fill="#b4b4b4"/><path d="M11.600 .3v11.400L2.600 6zM21.600 .3v11.400L11.800 6z" fill="#b4b4b4"/></svg>
<svg class="a" style="left:721px;top:10px" width="19" height="22" viewBox="0 0 19 22"><path d="M1 1l17.500 10L1 21z" fill="#b6b6b6"/></svg>
<svg class="a" style="left:751.500px;top:16px" width="22" height="12" viewBox="0 0 22 12"><path d="M20.500 .3h1.200v11.400h-1.200z" fill="#b4b4b4"/><path d="M10.400 .3v11.400l9-5.700zM.4 .3v11.400L10.200 6z" fill="#b4b4b4"/></svg>
<div class="a" style="left:794px;top:6px;width:130px;height:31px;border-radius:3px;background:linear-gradient(180deg,#17385c 0%,#0e2a48 47%,#000 50%,#000 100%);border:1px solid #1a1a1a"></div>
<div class="t" id="tc" style="left:818px;top:14.300px;font-size:15.500px;color:#35c2ee;letter-spacing:.800px;-webkit-text-stroke:.450px #35c2ee"><span style="color:#1b6783;-webkit-text-stroke:.450px #1b6783">00:</span>00:28<span style="font-size:10.800px;letter-spacing:.300px;margin-left:3px;font-weight:bold;-webkit-text-stroke:0;vertical-align:1.300px">08</span></div>
<div class="a" style="left:1458px;top:14.800px;width:118.500px;height:5.800px;background:#000;border-radius:1px"></div>
<div class="a" style="left:1458px;top:23px;width:118.500px;height:5.800px;background:#000;border-radius:1px"></div>
<svg class="a" style="left:1584px;top:11.500px" width="23" height="21" viewBox="0 0 23 21"><path d="M3.500 14V10.500a8 8 0 0 1 16 0V14" stroke="#000" stroke-width="1.900" fill="none"/><path d="M6.500 10.500v10H5a4.500 5 0 0 1 0-10zM16.500 10.500v10H18a4.500 5 0 0 0 0-10z" fill="#000"/></svg>
</div>
<div id="blueline" class="a"></div>
<div id="ruler" class="a">
<div class="a" style="left:35px;top:13px;width:1576px;height:3.500px;background:repeating-linear-gradient(90deg,#3c3c3c 0,#3c3c3c 1px,transparent 1px,transparent 10.9367px)"></div>
<div class="a" style="left:35.0px;top:10px;width:1px;height:6.500px;background:#484848"></div><div class="t rl" style="left:5.0px;width:60px">0s</div>
<div class="a" style="left:133.4px;top:10px;width:1px;height:6.500px;background:#484848"></div><div class="t rl" style="left:103.4px;width:60px">30s</div>
<div class="a" style="left:231.9px;top:10px;width:1px;height:6.500px;background:#484848"></div><div class="t rl" style="left:201.9px;width:60px">1m</div>
<div class="a" style="left:330.3px;top:10px;width:1px;height:6.500px;background:#484848"></div><div class="t rl" style="left:300.3px;width:60px">1m30s</div>
<div class="a" style="left:428.7px;top:10px;width:1px;height:6.500px;background:#484848"></div><div class="t rl" style="left:398.7px;width:60px">2m</div>
<div class="a" style="left:527.2px;top:10px;width:1px;height:6.500px;background:#484848"></div><div class="t rl" style="left:497.2px;width:60px">2m30s</div>
<div class="a" style="left:625.6px;top:10px;width:1px;height:6.500px;background:#484848"></div><div class="t rl" style="left:595.6px;width:60px">3m</div>
<div class="a" style="left:724.0px;top:10px;width:1px;height:6.500px;background:#484848"></div><div class="t rl" style="left:694.0px;width:60px">3m30s</div>
<div class="a" style="left:822.4px;top:10px;width:1px;height:6.500px;background:#484848"></div><div class="t rl" style="left:792.4px;width:60px">4m</div>
<div class="a" style="left:920.9px;top:10px;width:1px;height:6.500px;background:#484848"></div><div class="t rl" style="left:890.9px;width:60px">4m30s</div>
<div class="a" style="left:1019.3px;top:10px;width:1px;height:6.500px;background:#484848"></div><div class="t rl" style="left:989.3px;width:60px">5m</div>
<div class="a" style="left:1117.7px;top:10px;width:1px;height:6.500px;background:#484848"></div><div class="t rl" style="left:1087.7px;width:60px">5m30s</div>
<div class="a" style="left:1216.2px;top:10px;width:1px;height:6.500px;background:#484848"></div><div class="t rl" style="left:1186.2px;width:60px">6m</div>
<div class="a" style="left:1314.6px;top:10px;width:1px;height:6.500px;background:#484848"></div><div class="t rl" style="left:1284.6px;width:60px">6m30s</div>
<div class="a" style="left:1413.0px;top:10px;width:1px;height:6.500px;background:#484848"></div><div class="t rl" style="left:1383.0px;width:60px">7m</div>
<div class="a" style="left:1511.5px;top:10px;width:1px;height:6.500px;background:#484848"></div><div class="t rl" style="left:1481.5px;width:60px">7m30s</div>
<div class="a" style="left:1609.9px;top:10px;width:1px;height:6.500px;background:#484848"></div><div class="t rl" style="left:1579.9px;width:60px">8m</div>
<div class="a" style="left:0;top:16px;width:1611px;height:1px;background:#3b3b3b"></div>
</div>
<!--TRS--><div id="tracks" class="a">
<div class="a" style="left:245.7px;top:0;width:1px;height:265px;background:#373737"></div><div class="a" style="left:455.4px;top:0;width:1px;height:265px;background:#373737"></div><div class="a" style="left:665.1px;top:0;width:1px;height:265px;background:#373737"></div><div class="a" style="left:874.8px;top:0;width:1px;height:265px;background:#373737"></div><div class="a" style="left:1084.5px;top:0;width:1px;height:265px;background:#373737"></div><div class="a" style="left:1294.2px;top:0;width:1px;height:265px;background:#373737"></div><div class="a" style="left:1503.9px;top:0;width:1px;height:265px;background:#373737"></div><div class="a" style="left:0;top:70.5px;width:1611px;height:1px;background:#373737"></div><div class="a" style="left:0;top:141.3px;width:1611px;height:1px;background:#373737"></div><div class="a" style="left:0;top:211.7px;width:1611px;height:1px;background:#373737"></div>
<div class="a" style="left:14px;top:1.0px;width:19px;height:69px;background:#323232"></div><div class="a" style="left:0;top:1.0px;width:14px;height:33.5px;background:#3c3c3c"></div><div class="a" style="left:0;top:35.5px;width:14px;height:34px;background:#3c3c3c"></div><svg class="a" style="left:0px;top:12.6px" width="14" height="9" viewBox="0 0 14 9"><path d="M.3 4.5C2 1.8 4.3 .6 6.800 .6s4.800 1.200 6.500 3.900C11.600 7.200 9.300 8.400 6.800 8.400S2 7.200 .3 4.500z" stroke="#dcdcdc" stroke-width=".9" fill="none"/><circle cx="6.800" cy="4.500" r="2.300" stroke="#dcdcdc" stroke-width=".9" fill="none"/><circle cx="6.800" cy="4.500" r=".8" fill="#dcdcdc"/></svg><svg class="a" style="left:2px;top:46.5px" width="10" height="11" viewBox="0 0 10 11"><path d="M0 3.200h3v4.600H0zM3.800 3L8.500 .3v10.400L3.800 8z" fill="#cfcfcf"/></svg><svg class="a" style="left:19.500px;top:8.5px" width="9" height="16" viewBox="0 0 9 16"><path d="M.8 5l3.700-3.700L8.200 5M.8 11l3.700 3.700L8.200 11" stroke="#8c8c8c" stroke-width="1.100" fill="none"/></svg><div class="a" style="left:19.500px;top:57.0px;width:8.500px;height:1.200px;background:#bdbdbd;box-shadow:0 3.300px 0 #bdbdbd,0 6.600px 0 #bdbdbd"></div>
<div class="a" style="left:14px;top:71.6px;width:19px;height:69px;background:#323232"></div><div class="a" style="left:0;top:71.6px;width:14px;height:33.5px;background:#3c3c3c"></div><div class="a" style="left:0;top:106.1px;width:14px;height:34px;background:#3c3c3c"></div><svg class="a" style="left:0px;top:83.2px" width="14" height="9" viewBox="0 0 14 9"><path d="M.3 4.5C2 1.8 4.3 .6 6.800 .6s4.800 1.200 6.500 3.900C11.600 7.200 9.300 8.400 6.800 8.400S2 7.200 .3 4.500z" stroke="#dcdcdc" stroke-width=".9" fill="none"/><circle cx="6.800" cy="4.500" r="2.300" stroke="#dcdcdc" stroke-width=".9" fill="none"/><circle cx="6.800" cy="4.500" r=".8" fill="#dcdcdc"/></svg><svg class="a" style="left:2px;top:117.1px" width="10" height="11" viewBox="0 0 10 11"><path d="M0 3.200h3v4.600H0zM3.800 3L8.500 .3v10.400L3.800 8z" fill="#cfcfcf"/></svg><svg class="a" style="left:19.500px;top:79.1px" width="9" height="16" viewBox="0 0 9 16"><path d="M.8 5l3.700-3.700L8.200 5M.8 11l3.700 3.700L8.200 11" stroke="#8c8c8c" stroke-width="1.100" fill="none"/></svg><div class="a" style="left:19.500px;top:127.6px;width:8.500px;height:1.200px;background:#bdbdbd;box-shadow:0 3.300px 0 #bdbdbd,0 6.600px 0 #bdbdbd"></div>
<div class="a" style="left:14px;top:142.2px;width:19px;height:69px;background:#323232"></div><div class="a" style="left:0;top:142.2px;width:14px;height:33.5px;background:#3c3c3c"></div><div class="a" style="left:0;top:176.7px;width:14px;height:34px;background:#3c3c3c"></div><svg class="a" style="left:0px;top:153.8px" width="14" height="9" viewBox="0 0 14 9"><path d="M.3 4.5C2 1.8 4.3 .6 6.800 .6s4.800 1.200 6.500 3.900C11.600 7.200 9.300 8.400 6.800 8.400S2 7.200 .3 4.500z" stroke="#dcdcdc" stroke-width=".9" fill="none"/><circle cx="6.800" cy="4.500" r="2.300" stroke="#dcdcdc" stroke-width=".9" fill="none"/><circle cx="6.800" cy="4.500" r=".8" fill="#dcdcdc"/></svg><svg class="a" style="left:2px;top:187.7px" width="10" height="11" viewBox="0 0 10 11"><path d="M0 3.200h3v4.600H0zM3.800 3L8.500 .3v10.400L3.800 8z" fill="#cfcfcf"/></svg><svg class="a" style="left:19.500px;top:149.7px" width="9" height="16" viewBox="0 0 9 16"><path d="M.8 5l3.700-3.700L8.200 5M.8 11l3.700 3.700L8.200 11" stroke="#8c8c8c" stroke-width="1.100" fill="none"/></svg><div class="a" style="left:19.500px;top:198.2px;width:8.500px;height:1.200px;background:#bdbdbd;box-shadow:0 3.300px 0 #bdbdbd,0 6.600px 0 #bdbdbd"></div>
<div class="a clip" style="left:35.5px;top:4px;width:84.5px;height:59px;background:#9fc893">
<div class="t ct" style="left:4.5px;top:7.6px;right:2px">C922 Pro Stream Webcam</div>
<svg class="a" style="left:0;top:9.5px" width="85" height="16" viewBox="0 0 85 16"><path d="M0.0 16.0 L0.0 12.4 L1.0 11.7 L2.0 11.8 L3.0 11.4 L4.0 11.3 L5.0 9.2 L6.0 11.1 L7.0 11.3 L8.0 10.0 L9.0 10.6 L10.0 10.2 L11.0 9.9 L12.0 10.3 L13.0 9.9 L14.0 10.2 L15.0 10.6 L16.0 11.0 L17.0 11.0 L18.0 11.1 L19.0 11.3 L20.0 10.9 L21.0 10.6 L22.0 9.3 L23.0 10.5 L24.0 10.2 L25.0 10.4 L26.0 10.7 L27.0 5.6 L28.0 10.7 L29.0 10.3 L30.0 10.3 L31.0 9.0 L32.0 10.5 L33.0 10.8 L34.0 10.8 L35.0 10.5 L36.0 10.9 L37.0 10.8 L38.0 10.5 L39.0 7.6 L40.0 10.6 L41.0 10.6 L42.0 10.2 L43.0 10.1 L44.0 10.3 L45.0 9.9 L46.0 10.0 L47.0 10.3 L48.0 10.5 L49.0 10.3 L50.0 10.5 L51.0 10.5 L52.0 10.6 L53.0 7.4 L54.0 10.7 L55.0 10.4 L56.0 10.6 L57.0 10.3 L58.0 10.0 L59.0 9.8 L60.0 10.2 L61.0 10.3 L62.0 10.1 L63.0 10.1 L64.0 10.1 L65.0 8.4 L66.0 10.2 L67.0 10.1 L68.0 10.2 L69.0 10.5 L70.0 7.9 L71.0 10.8 L72.0 11.0 L73.0 10.9 L74.0 11.2 L75.0 11.4 L76.0 11.2 L77.0 10.7 L78.0 10.4 L79.0 10.7 L80.0 10.3 L81.0 10.5 L82.0 10.8 L83.0 11.0 L84.0 11.0 L85.0 11.1 L85.0 16.0Z" fill="#6ab758"/></svg>
<div class="a" style="left:0;top:25px;width:85px;height:34.5px;background:#8d8791"></div>
<div class="a" style="left:0;top:25px;width:42px;height:34.5px;background:linear-gradient(90deg,#3a3a48 0,#6f6a78 12%,#b9b4c0 30%,#d8d4dc 45%,#bdb6bd 60%,#8a8088 80%,#6a6470 100%)"></div>
<div class="a" style="left:0;top:46px;width:12px;height:13px;background:#1f2330;border-radius:3px 3px 0 0"></div>
<div class="a" style="left:22px;top:35px;width:3px;height:21px;background:#7a2a30"></div>
<div class="a" style="left:34px;top:33px;width:3.5px;height:23px;background:#9a4030"></div>
<div class="a" style="left:6px;top:32px;width:12px;height:11px;background:#e4e2ea"></div>
<div class="a" style="left:42.5px;top:25px;width:42px;height:34.5px;background:linear-gradient(90deg,#8d8590 0,#c8c2cc 25%,#b0a8b2 50%,#d4d0da 75%,#78707c 100%)"></div>
<div class="a" style="left:70px;top:30px;width:11px;height:15px;background:#e6e4ee"></div>
<div class="a" style="left:51.5px;top:30.5px;width:12px;height:14.5px;border-radius:45%;background:#b78f80"></div>
<div class="a" style="left:51px;top:29px;width:13px;height:6px;border-radius:5px 5px 1px 1px;background:#2c2220"></div>
<div class="a" style="left:44px;top:44.5px;width:28px;height:15px;border-radius:8px 8px 0 0;background:#14151c"></div>
<div class="a" style="left:81.5px;top:2px;width:1px;height:55px;background:#4a5a48"></div>
</div>
<div class="a clip" style="left:120.5px;top:4px;width:232.2px;height:59px">
<div class="t ct" style="left:5px;top:7.6px"><span style="opacity:.12">Audio from C922 Pro Stream Webcam</span></div>
<svg class="a" style="left:0;top:22px" width="232" height="16" viewBox="0 0 232 16"><path d="M0.0 5.8 L0.5 6.1 L1.0 6.0 L1.5 6.2 L2.0 6.6 L2.5 6.3 L3.0 6.6 L3.5 6.9 L4.0 7.0 L4.5 6.9 L5.0 6.8 L5.5 7.0 L6.0 7.1 L6.5 7.1 L7.0 7.3 L7.5 7.3 L8.0 7.4 L8.5 7.3 L9.0 7.4 L9.5 7.4 L10.0 7.4 L10.5 5.0 L11.0 5.8 L11.5 5.7 L12.0 5.5 L12.5 6.2 L13.0 6.2 L13.5 6.2 L14.0 6.2 L14.5 6.3 L15.0 6.3 L15.5 6.8 L16.0 6.9 L16.5 6.8 L17.0 6.9 L17.5 7.0 L18.0 6.9 L18.5 7.1 L19.0 6.9 L19.5 7.2 L20.0 7.1 L20.5 7.4 L21.0 6.3 L21.5 6.5 L22.0 6.8 L22.5 6.7 L23.0 7.0 L23.5 7.4 L24.0 7.4 L24.5 7.4 L25.0 7.4 L25.5 7.4 L26.0 6.0 L26.5 6.2 L27.0 6.1 L27.5 6.5 L28.0 6.6 L28.5 6.5 L29.0 6.5 L29.5 6.5 L30.0 6.7 L30.5 4.4 L31.0 5.2 L31.5 5.3 L32.0 5.7 L32.5 5.6 L33.0 6.0 L33.5 5.8 L34.0 5.3 L34.5 6.0 L35.0 6.0 L35.5 5.7 L36.0 6.3 L36.5 5.9 L37.0 6.4 L37.5 6.3 L38.0 6.8 L38.5 6.5 L39.0 6.7 L39.5 7.4 L40.0 7.4 L40.5 7.4 L41.0 7.4 L41.5 7.4 L42.0 7.4 L42.5 7.0 L43.0 7.1 L43.5 6.2 L44.0 6.3 L44.5 6.6 L45.0 6.8 L45.5 6.7 L46.0 6.9 L46.5 7.1 L47.0 7.2 L47.5 7.0 L48.0 7.2 L48.5 7.3 L49.0 7.3 L49.5 7.3 L50.0 7.4 L50.5 4.0 L51.0 4.2 L51.5 4.7 L52.0 4.9 L52.5 4.9 L53.0 5.6 L53.5 5.4 L54.0 5.5 L54.5 5.9 L55.0 5.9 L55.5 5.9 L56.0 5.9 L56.5 6.4 L57.0 6.4 L57.5 6.5 L58.0 6.7 L58.6 6.6 L59.1 7.0 L59.6 7.0 L60.1 7.0 L60.6 7.1 L61.1 7.2 L61.6 7.3 L62.1 7.3 L62.6 7.4 L63.1 7.4 L63.6 7.3 L64.1 7.4 L64.6 7.4 L65.1 7.4 L65.6 7.4 L66.1 7.4 L66.6 7.4 L67.1 7.4 L67.6 7.4 L68.1 7.4 L68.6 7.4 L69.1 7.4 L69.6 7.4 L70.1 7.4 L70.6 7.4 L71.1 7.4 L71.6 7.4 L72.1 7.4 L72.6 7.4 L73.1 7.4 L73.6 7.4 L74.1 7.4 L74.6 7.4 L75.1 7.4 L75.6 7.4 L76.1 7.4 L76.6 7.4 L77.1 7.4 L77.6 7.4 L78.1 7.4 L78.6 7.4 L79.1 6.6 L79.6 6.8 L80.1 7.0 L80.6 7.0 L81.1 7.2 L81.6 7.3 L82.1 7.1 L82.6 7.3 L83.1 7.2 L83.6 7.2 L84.1 7.4 L84.6 7.4 L85.1 7.4 L85.6 7.4 L86.1 7.4 L86.6 4.5 L87.1 5.3 L87.6 5.4 L88.1 5.7 L88.6 5.1 L89.1 5.9 L89.6 5.9 L90.1 5.8 L90.6 5.9 L91.1 5.9 L91.6 6.4 L92.1 6.4 L92.6 6.6 L93.1 6.6 L93.6 5.1 L94.1 5.5 L94.6 5.4 L95.1 5.8 L95.6 6.3 L96.1 6.2 L96.6 6.2 L97.1 6.4 L97.6 6.5 L98.1 6.5 L98.6 6.4 L99.1 6.4 L99.6 6.6 L100.1 6.6 L100.6 6.9 L101.1 6.9 L101.6 7.0 L102.1 7.2 L102.6 5.9 L103.1 6.1 L103.6 6.4 L104.1 6.5 L104.6 4.8 L105.1 4.9 L105.6 7.4 L106.1 4.8 L106.6 4.7 L107.1 5.2 L107.6 5.4 L108.1 5.6 L108.6 5.6 L109.1 5.9 L109.6 5.8 L110.1 6.3 L110.6 6.0 L111.1 6.3 L111.6 6.5 L112.1 6.6 L112.6 6.8 L113.1 6.8 L113.6 6.9 L114.1 6.8 L114.6 7.0 L115.1 7.1 L115.6 7.3 L116.1 7.1 L116.6 7.3 L117.1 5.2 L117.6 5.2 L118.1 5.4 L118.6 6.0 L119.1 5.7 L119.6 5.8 L120.1 6.3 L120.6 5.9 L121.1 6.0 L121.6 6.3 L122.1 6.0 L122.6 6.6 L123.1 6.4 L123.6 6.6 L124.1 6.8 L124.6 6.8 L125.1 7.0 L125.6 5.9 L126.1 5.6 L126.6 5.9 L127.1 6.2 L127.6 6.3 L128.1 6.6 L128.6 6.6 L129.1 6.7 L129.6 6.6 L130.1 6.5 L130.6 6.7 L131.1 6.9 L131.6 6.8 L132.1 6.5 L132.6 6.7 L133.1 6.7 L133.6 6.9 L134.1 7.1 L134.6 7.2 L135.1 7.3 L135.6 4.9 L136.1 5.6 L136.6 5.4 L137.1 5.8 L137.6 6.2 L138.1 5.7 L138.6 6.0 L139.1 6.4 L139.6 6.4 L140.1 6.5 L140.6 6.6 L141.1 6.9 L141.6 6.6 L142.1 6.9 L142.6 6.8 L143.1 7.2 L143.6 7.1 L144.1 7.0 L144.6 7.2 L145.1 7.2 L145.6 6.4 L146.1 6.5 L146.6 6.7 L147.1 6.6 L147.6 6.7 L148.1 6.9 L148.6 5.5 L149.1 5.7 L149.6 6.0 L150.1 6.4 L150.6 5.7 L151.1 5.9 L151.6 6.4 L152.1 6.1 L152.6 4.6 L153.1 4.2 L153.6 5.1 L154.1 4.9 L154.6 5.6 L155.1 5.2 L155.6 5.8 L156.1 5.5 L156.6 5.9 L157.1 5.8 L157.6 6.0 L158.1 6.2 L158.6 6.3 L159.1 6.4 L159.6 4.3 L160.1 5.4 L160.6 5.2 L161.1 5.6 L161.6 5.4 L162.1 5.5 L162.6 5.8 L163.1 5.8 L163.6 5.9 L164.1 6.3 L164.6 6.6 L165.1 6.5 L165.6 5.9 L166.1 6.1 L166.6 6.2 L167.1 6.4 L167.6 6.3 L168.1 6.4 L168.6 6.5 L169.1 6.9 L169.6 6.9 L170.1 6.9 L170.6 6.9 L171.1 7.0 L171.6 7.2 L172.1 7.3 L172.6 7.4 L173.1 7.4 L173.6 7.4 L174.1 7.4 L174.7 7.4 L175.2 7.4 L175.7 7.4 L176.2 7.4 L176.7 7.4 L177.2 7.4 L177.7 5.5 L178.2 5.8 L178.7 5.8 L179.2 6.3 L179.7 6.5 L180.2 6.1 L180.7 6.3 L181.2 6.3 L181.7 6.8 L182.2 6.7 L182.7 6.7 L183.2 7.0 L183.7 6.9 L184.2 7.0 L184.7 5.2 L185.2 5.0 L185.7 5.9 L186.2 5.9 L186.7 5.7 L187.2 6.1 L187.7 5.9 L188.2 6.0 L188.7 6.2 L189.2 6.7 L189.7 6.5 L190.2 6.7 L190.7 7.4 L191.2 7.4 L191.7 6.6 L192.2 6.6 L192.7 6.8 L193.2 7.0 L193.7 7.0 L194.2 7.0 L194.7 6.3 L195.2 6.1 L195.7 6.3 L196.2 6.7 L196.7 6.8 L197.2 6.7 L197.7 6.8 L198.2 6.7 L198.7 6.9 L199.2 7.0 L199.7 6.9 L200.2 7.1 L200.7 6.9 L201.2 6.0 L201.7 6.1 L202.2 6.7 L202.7 5.4 L203.2 7.4 L203.7 7.4 L204.2 7.4 L204.7 7.4 L205.2 7.4 L205.7 7.4 L206.2 7.4 L206.7 7.4 L207.2 7.4 L207.7 7.4 L208.2 7.4 L208.7 7.4 L209.2 5.5 L209.7 5.8 L210.2 6.2 L210.7 5.4 L211.2 5.9 L211.7 5.7 L212.2 6.1 L212.7 6.2 L213.2 6.5 L213.7 6.6 L214.2 6.5 L214.7 6.8 L215.2 6.7 L215.7 6.6 L216.2 6.9 L216.7 6.9 L217.2 7.0 L217.7 5.7 L218.2 5.9 L218.7 6.4 L219.2 6.2 L219.7 6.3 L220.2 6.4 L220.7 6.5 L221.2 6.3 L221.7 6.3 L222.2 6.6 L222.7 6.6 L223.2 6.4 L223.7 6.6 L224.2 6.4 L224.7 6.6 L225.2 6.6 L225.7 6.7 L226.2 6.8 L226.7 7.0 L227.2 7.1 L227.7 7.1 L228.2 7.4 L228.7 7.4 L229.2 7.4 L229.7 7.4 L230.2 7.4 L230.7 7.4 L231.2 7.4 L231.7 7.4 L232.2 7.4 L232.2 9.0 L231.7 9.0 L231.2 9.0 L230.7 9.0 L230.2 9.0 L229.7 9.0 L229.2 9.0 L228.7 9.0 L228.2 9.0 L227.7 9.2 L227.2 9.2 L226.7 9.3 L226.2 9.5 L225.7 9.6 L225.2 9.7 L224.7 9.7 L224.2 9.9 L223.7 9.7 L223.2 9.9 L222.7 9.7 L222.2 9.8 L221.7 10.0 L221.2 10.0 L220.7 9.8 L220.2 9.9 L219.7 10.0 L219.2 10.1 L218.7 9.9 L218.2 10.3 L217.7 10.5 L217.2 9.3 L216.7 9.4 L216.2 9.4 L215.7 9.7 L215.2 9.7 L214.7 9.5 L214.2 9.8 L213.7 9.7 L213.2 9.8 L212.7 10.1 L212.2 10.2 L211.7 10.6 L211.2 10.4 L210.7 10.9 L210.2 10.1 L209.7 10.5 L209.2 10.8 L208.7 9.0 L208.2 9.0 L207.7 9.0 L207.2 9.0 L206.7 9.0 L206.2 9.0 L205.7 9.0 L205.2 9.0 L204.7 9.0 L204.2 9.0 L203.7 9.0 L203.2 9.0 L202.7 10.9 L202.2 9.7 L201.7 10.2 L201.2 10.3 L200.7 9.4 L200.2 9.3 L199.7 9.4 L199.2 9.4 L198.7 9.5 L198.2 9.6 L197.7 9.5 L197.2 9.6 L196.7 9.5 L196.2 9.6 L195.7 10.0 L195.2 10.2 L194.7 10.0 L194.2 9.4 L193.7 9.3 L193.2 9.4 L192.7 9.5 L192.2 9.7 L191.7 9.7 L191.2 9.0 L190.7 9.0 L190.2 9.6 L189.7 9.8 L189.2 9.7 L188.7 10.1 L188.2 10.3 L187.7 10.4 L187.2 10.2 L186.7 10.6 L186.2 10.4 L185.7 10.4 L185.2 11.2 L184.7 11.1 L184.2 9.3 L183.7 9.4 L183.2 9.3 L182.7 9.7 L182.2 9.6 L181.7 9.5 L181.2 10.0 L180.7 10.0 L180.2 10.2 L179.7 9.9 L179.2 10.0 L178.7 10.5 L178.2 10.4 L177.7 10.8 L177.2 9.0 L176.7 9.0 L176.2 9.0 L175.7 9.0 L175.2 9.0 L174.7 9.0 L174.1 9.0 L173.6 9.0 L173.1 9.0 L172.6 9.0 L172.1 9.1 L171.6 9.2 L171.1 9.4 L170.6 9.4 L170.1 9.5 L169.6 9.5 L169.1 9.4 L168.6 9.8 L168.1 9.9 L167.6 10.0 L167.1 9.9 L166.6 10.1 L166.1 10.2 L165.6 10.3 L165.1 9.8 L164.6 9.7 L164.1 10.0 L163.6 10.4 L163.1 10.5 L162.6 10.4 L162.1 10.8 L161.6 10.9 L161.1 10.6 L160.6 11.0 L160.1 10.9 L159.6 11.9 L159.1 9.9 L158.6 10.0 L158.1 10.1 L157.6 10.3 L157.1 10.5 L156.6 10.3 L156.1 10.8 L155.6 10.5 L155.1 11.0 L154.6 10.7 L154.1 11.4 L153.6 11.2 L153.1 12.0 L152.6 11.6 L152.1 10.2 L151.6 9.9 L151.1 10.4 L150.6 10.6 L150.1 9.9 L149.6 10.3 L149.1 10.6 L148.6 10.7 L148.1 9.5 L147.6 9.7 L147.1 9.7 L146.6 9.6 L146.1 9.8 L145.6 9.9 L145.1 9.1 L144.6 9.1 L144.1 9.3 L143.6 9.2 L143.1 9.2 L142.6 9.5 L142.1 9.4 L141.6 9.7 L141.1 9.4 L140.6 9.7 L140.1 9.8 L139.6 9.9 L139.1 9.9 L138.6 10.2 L138.1 10.5 L137.6 10.1 L137.1 10.5 L136.6 10.9 L136.1 10.7 L135.6 11.3 L135.1 9.1 L134.6 9.2 L134.1 9.2 L133.6 9.5 L133.1 9.6 L132.6 9.6 L132.1 9.8 L131.6 9.5 L131.1 9.4 L130.6 9.6 L130.1 9.8 L129.6 9.7 L129.1 9.6 L128.6 9.7 L128.1 9.8 L127.6 10.0 L127.1 10.1 L126.6 10.4 L126.1 10.7 L125.6 10.4 L125.1 9.3 L124.6 9.5 L124.1 9.5 L123.6 9.7 L123.1 9.9 L122.6 9.7 L122.1 10.3 L121.6 10.0 L121.1 10.3 L120.6 10.4 L120.1 10.0 L119.6 10.5 L119.1 10.5 L118.6 10.3 L118.1 10.8 L117.6 11.0 L117.1 11.0 L116.6 9.0 L116.1 9.2 L115.6 9.1 L115.1 9.3 L114.6 9.3 L114.1 9.6 L113.6 9.5 L113.1 9.5 L112.6 9.6 L112.1 9.7 L111.6 9.8 L111.1 10.0 L110.6 10.3 L110.1 10.0 L109.6 10.5 L109.1 10.4 L108.6 10.7 L108.1 10.6 L107.6 10.9 L107.1 11.1 L106.6 11.5 L106.1 11.5 L105.6 9.0 L105.1 11.3 L104.6 11.4 L104.1 9.8 L103.6 9.9 L103.1 10.2 L102.6 10.4 L102.1 9.2 L101.6 9.3 L101.1 9.5 L100.6 9.4 L100.1 9.7 L99.6 9.7 L99.1 9.9 L98.6 9.9 L98.1 9.8 L97.6 9.8 L97.1 9.9 L96.6 10.1 L96.1 10.1 L95.6 10.0 L95.1 10.5 L94.6 10.8 L94.1 10.8 L93.6 11.2 L93.1 9.7 L92.6 9.7 L92.1 9.9 L91.6 9.9 L91.1 10.3 L90.6 10.4 L90.1 10.5 L89.6 10.4 L89.1 10.4 L88.6 11.1 L88.1 10.6 L87.6 10.8 L87.1 10.9 L86.6 11.7 L86.1 9.0 L85.6 9.0 L85.1 9.0 L84.6 9.0 L84.1 9.0 L83.6 9.1 L83.1 9.2 L82.6 9.0 L82.1 9.2 L81.6 9.1 L81.1 9.1 L80.6 9.4 L80.1 9.4 L79.6 9.6 L79.1 9.7 L78.6 9.0 L78.1 9.0 L77.6 9.0 L77.1 9.0 L76.6 9.0 L76.1 9.0 L75.6 9.0 L75.1 9.0 L74.6 9.0 L74.1 9.0 L73.6 9.0 L73.1 9.0 L72.6 9.0 L72.1 9.0 L71.6 9.0 L71.1 9.0 L70.6 9.0 L70.1 9.0 L69.6 9.0 L69.1 9.0 L68.6 9.0 L68.1 9.0 L67.6 9.0 L67.1 9.0 L66.6 9.0 L66.1 9.0 L65.6 9.0 L65.1 9.0 L64.6 9.0 L64.1 9.0 L63.6 9.0 L63.1 9.0 L62.6 9.0 L62.1 9.1 L61.6 9.0 L61.1 9.1 L60.6 9.3 L60.1 9.3 L59.6 9.3 L59.1 9.4 L58.6 9.8 L58.0 9.6 L57.5 9.8 L57.0 9.9 L56.5 9.9 L56.0 10.4 L55.5 10.4 L55.0 10.4 L54.5 10.4 L54.0 10.8 L53.5 10.9 L53.0 10.6 L52.5 11.3 L52.0 11.4 L51.5 11.5 L51.0 12.0 L50.5 12.2 L50.0 9.0 L49.5 9.0 L49.0 9.1 L48.5 9.1 L48.0 9.1 L47.5 9.3 L47.0 9.2 L46.5 9.2 L46.0 9.5 L45.5 9.6 L45.0 9.5 L44.5 9.7 L44.0 10.0 L43.5 10.1 L43.0 9.3 L42.5 9.3 L42.0 9.0 L41.5 9.0 L41.0 9.0 L40.5 9.0 L40.0 9.0 L39.5 9.0 L39.0 9.6 L38.5 9.8 L38.0 9.6 L37.5 10.0 L37.0 9.9 L36.5 10.3 L36.0 10.0 L35.5 10.6 L35.0 10.2 L34.5 10.3 L34.0 10.9 L33.5 10.5 L33.0 10.3 L32.5 10.7 L32.0 10.6 L31.5 10.9 L31.0 11.0 L30.5 11.8 L30.0 9.7 L29.5 9.8 L29.0 9.8 L28.5 9.8 L28.0 9.7 L27.5 9.8 L27.0 10.2 L26.5 10.1 L26.0 10.2 L25.5 9.0 L25.0 9.0 L24.5 9.0 L24.0 9.0 L23.5 9.0 L23.0 9.3 L22.5 9.6 L22.0 9.5 L21.5 9.8 L21.0 10.0 L20.5 9.0 L20.0 9.3 L19.5 9.1 L19.0 9.4 L18.5 9.2 L18.0 9.4 L17.5 9.3 L17.0 9.5 L16.5 9.6 L16.0 9.5 L15.5 9.6 L15.0 10.0 L14.5 10.0 L14.0 10.1 L13.5 10.1 L13.0 10.1 L12.5 10.1 L12.0 10.7 L11.5 10.6 L11.0 10.5 L10.5 11.2 L10.0 9.0 L9.5 9.0 L9.0 9.0 L8.5 9.0 L8.0 9.0 L7.5 9.0 L7.0 9.0 L6.5 9.2 L6.0 9.2 L5.5 9.3 L5.0 9.5 L4.5 9.4 L4.0 9.3 L3.5 9.5 L3.0 9.7 L2.5 10.0 L2.0 9.7 L1.5 10.1 L1.0 10.3 L0.5 10.2 L0.0 10.5Z" fill="#a8d998"/></svg>
</div>
<div class="a clip" style="left:353.5px;top:4px;width:322.7px;height:59px">
<div class="t ct" style="left:5px;top:7.6px"><span>Audio from C922 Pro Stream Webcam</span></div>
<svg class="a" style="left:0;top:22px" width="323" height="16" viewBox="0 0 323 16"><path d="M0.0 7.4 L0.5 7.4 L1.0 7.4 L1.5 7.4 L2.0 7.3 L2.5 7.3 L3.0 7.4 L3.5 7.4 L4.0 7.4 L4.5 7.4 L5.0 7.4 L5.5 7.4 L6.0 6.8 L6.5 6.7 L7.0 6.8 L7.5 6.8 L8.0 7.0 L8.5 7.4 L9.0 5.8 L9.5 5.0 L10.0 5.2 L10.5 5.9 L11.0 5.9 L11.5 6.1 L12.0 6.2 L12.5 6.3 L13.0 4.7 L13.5 5.0 L14.0 4.8 L14.5 5.2 L15.0 5.1 L15.5 5.0 L16.0 5.2 L16.5 5.9 L17.0 5.9 L17.5 5.8 L18.0 6.0 L18.5 6.2 L19.0 6.2 L19.5 6.5 L20.0 6.8 L20.5 6.7 L21.0 6.7 L21.5 6.8 L22.0 7.1 L22.5 7.1 L23.0 7.0 L23.5 7.1 L24.0 7.1 L24.5 7.3 L25.0 7.3 L25.5 7.4 L26.0 7.4 L26.5 7.4 L27.0 7.4 L27.5 7.4 L28.0 7.4 L28.5 7.4 L29.0 7.4 L29.5 7.4 L30.0 7.4 L30.5 5.6 L31.0 6.0 L31.5 6.1 L32.0 6.1 L32.5 6.0 L33.0 6.1 L33.5 6.5 L34.0 6.7 L34.5 6.7 L35.0 6.6 L35.5 6.7 L36.0 7.1 L36.5 6.9 L37.0 7.0 L37.5 7.0 L38.0 7.1 L38.5 6.6 L39.0 6.5 L39.5 6.6 L40.0 7.0 L40.5 6.9 L41.0 6.9 L41.5 7.1 L42.0 7.2 L42.5 7.1 L43.0 7.4 L43.5 7.4 L44.0 5.9 L44.5 6.0 L45.0 5.9 L45.5 6.5 L46.0 6.2 L46.5 6.2 L47.0 6.4 L47.5 5.7 L48.0 5.7 L48.5 5.6 L49.0 5.9 L49.5 6.4 L50.0 6.4 L50.5 6.5 L51.0 6.6 L51.5 7.4 L52.0 7.4 L52.5 7.4 L53.0 7.4 L53.5 7.4 L54.0 7.4 L54.5 7.4 L55.0 7.4 L55.5 7.4 L56.0 6.0 L56.5 6.2 L57.0 5.9 L57.5 6.3 L58.0 6.3 L58.5 6.3 L59.0 6.4 L59.5 6.7 L60.0 6.6 L60.5 6.9 L61.0 7.0 L61.5 7.0 L62.0 7.1 L62.5 7.1 L63.0 6.0 L63.5 6.4 L64.0 6.3 L64.5 6.2 L65.0 6.4 L65.5 6.5 L66.0 6.6 L66.5 6.8 L67.0 6.9 L67.5 7.0 L68.0 7.0 L68.5 7.1 L69.0 7.0 L69.5 6.8 L70.0 6.9 L70.5 6.9 L71.0 5.9 L71.5 6.1 L72.0 6.3 L72.5 6.2 L73.0 6.4 L73.5 6.2 L74.0 6.4 L74.5 6.4 L75.0 6.6 L75.5 6.9 L76.0 7.0 L76.5 7.1 L77.0 6.6 L77.5 7.0 L78.0 6.4 L78.5 6.5 L79.0 6.8 L79.5 6.8 L80.0 7.0 L80.5 7.1 L81.1 6.0 L81.6 5.8 L82.1 6.2 L82.6 6.1 L83.1 6.5 L83.6 6.2 L84.1 6.6 L84.6 4.8 L85.1 5.4 L85.6 4.3 L86.1 4.9 L86.6 4.7 L87.1 4.8 L87.6 5.4 L88.1 5.1 L88.6 5.5 L89.1 5.6 L89.6 6.1 L90.1 6.1 L90.6 6.4 L91.1 6.4 L91.6 6.6 L92.1 6.3 L92.6 6.7 L93.1 6.7 L93.6 6.6 L94.1 6.8 L94.6 4.9 L95.1 4.6 L95.6 7.4 L96.1 7.4 L96.6 7.4 L97.1 7.2 L97.6 7.3 L98.1 7.4 L98.6 7.3 L99.1 6.5 L99.6 6.4 L100.1 6.3 L100.6 6.4 L101.1 6.6 L101.6 6.7 L102.1 7.0 L102.6 6.8 L103.1 7.0 L103.6 7.2 L104.1 7.3 L104.6 7.2 L105.1 7.3 L105.6 7.2 L106.1 7.4 L106.6 7.2 L107.1 7.4 L107.6 7.4 L108.1 7.4 L108.6 6.6 L109.1 6.5 L109.6 6.6 L110.1 6.6 L110.6 7.0 L111.1 7.0 L111.6 6.3 L112.1 6.4 L112.6 6.9 L113.1 6.8 L113.6 6.7 L114.1 6.8 L114.6 7.1 L115.1 7.2 L115.6 7.0 L116.1 7.2 L116.6 7.3 L117.1 7.4 L117.6 7.3 L118.1 7.4 L118.6 7.4 L119.1 7.4 L119.6 7.4 L120.1 7.4 L120.6 7.4 L121.1 7.4 L121.6 7.4 L122.1 7.4 L122.6 7.4 L123.1 7.4 L123.6 7.4 L124.1 7.4 L124.6 7.4 L125.1 6.9 L125.6 6.9 L126.1 7.1 L126.6 7.0 L127.1 6.9 L127.6 7.0 L128.1 7.0 L128.6 7.2 L129.1 7.1 L129.6 7.2 L130.1 5.9 L130.6 6.1 L131.1 6.2 L131.6 6.7 L132.1 6.5 L132.6 6.6 L133.1 6.8 L133.6 6.7 L134.1 6.8 L134.6 6.8 L135.1 7.1 L135.6 6.9 L136.1 5.7 L136.6 6.1 L137.1 5.9 L137.6 6.0 L138.1 6.2 L138.6 6.1 L139.1 6.5 L139.6 6.8 L140.1 6.5 L140.6 6.7 L141.1 6.9 L141.6 6.9 L142.1 6.9 L142.6 7.0 L143.1 7.0 L143.6 7.0 L144.1 7.4 L144.6 7.3 L145.1 7.3 L145.6 7.1 L146.1 7.3 L146.6 7.2 L147.1 7.2 L147.6 7.4 L148.1 7.3 L148.6 7.4 L149.1 7.4 L149.6 7.4 L150.1 6.7 L150.6 6.9 L151.1 6.9 L151.6 7.4 L152.1 7.4 L152.6 7.4 L153.1 7.4 L153.6 7.4 L154.1 7.4 L154.6 7.4 L155.1 7.4 L155.6 7.4 L156.1 6.5 L156.6 6.2 L157.1 6.3 L157.6 6.8 L158.1 6.6 L158.6 6.9 L159.1 6.8 L159.6 6.9 L160.1 6.9 L160.6 7.2 L161.1 7.2 L161.6 7.2 L162.1 7.3 L162.6 6.8 L163.1 6.9 L163.6 6.9 L164.1 7.0 L164.6 6.9 L165.1 7.2 L165.6 5.7 L166.1 5.2 L166.6 6.0 L167.1 4.8 L167.6 4.5 L168.1 4.4 L168.6 4.8 L169.1 4.9 L169.6 5.5 L170.1 5.6 L170.6 5.5 L171.1 4.9 L171.6 5.1 L172.1 5.7 L172.6 5.3 L173.1 5.8 L173.6 6.0 L174.1 5.9 L174.6 6.0 L175.1 6.5 L175.6 6.3 L176.1 6.3 L176.6 6.5 L177.1 6.6 L177.6 6.7 L178.1 7.0 L178.6 7.1 L179.1 7.1 L179.6 7.2 L180.1 7.1 L180.6 7.3 L181.1 7.4 L181.6 7.4 L182.1 7.4 L182.6 7.4 L183.1 7.4 L183.6 5.3 L184.1 5.1 L184.6 5.4 L185.1 5.9 L185.6 5.6 L186.1 6.2 L186.6 6.3 L187.1 5.9 L187.6 6.1 L188.1 6.2 L188.6 6.5 L189.1 6.4 L189.6 6.6 L190.1 6.9 L190.6 6.8 L191.1 7.0 L191.6 6.9 L192.1 7.0 L192.6 7.1 L193.1 7.3 L193.6 7.4 L194.1 7.4 L194.6 7.4 L195.1 7.4 L195.6 7.4 L196.1 7.4 L196.6 7.4 L197.1 7.4 L197.6 6.0 L198.1 7.4 L198.6 7.4 L199.1 7.4 L199.6 7.4 L200.1 7.4 L200.6 7.4 L201.1 7.4 L201.6 7.4 L202.1 7.4 L202.6 7.4 L203.1 7.4 L203.6 7.4 L204.1 7.4 L204.6 7.4 L205.1 7.4 L205.6 6.1 L206.1 6.3 L206.6 6.5 L207.1 6.4 L207.6 6.6 L208.1 6.6 L208.6 6.6 L209.1 6.8 L209.6 7.1 L210.1 7.1 L210.6 7.1 L211.1 5.8 L211.6 5.8 L212.1 6.4 L212.6 6.5 L213.1 6.4 L213.6 6.6 L214.1 6.9 L214.6 6.7 L215.1 6.3 L215.6 5.3 L216.1 5.3 L216.6 5.4 L217.1 5.9 L217.6 5.2 L218.1 5.3 L218.6 5.9 L219.1 5.7 L219.6 5.7 L220.1 6.1 L220.6 6.3 L221.1 6.6 L221.6 6.7 L222.1 6.6 L222.6 6.6 L223.1 6.7 L223.6 6.7 L224.1 6.9 L224.6 6.0 L225.1 6.3 L225.6 6.6 L226.1 6.6 L226.6 6.7 L227.1 6.5 L227.6 6.9 L228.1 6.8 L228.6 6.9 L229.1 6.8 L229.6 5.7 L230.1 6.1 L230.6 6.0 L231.1 5.7 L231.6 6.1 L232.1 5.6 L232.6 5.7 L233.1 5.9 L233.6 6.0 L234.1 6.1 L234.6 6.2 L235.1 6.6 L235.6 6.6 L236.1 6.9 L236.6 7.4 L237.1 7.4 L237.6 7.4 L238.1 7.4 L238.6 3.9 L239.1 4.7 L239.6 4.6 L240.1 4.6 L240.6 5.0 L241.1 5.1 L241.6 5.3 L242.2 5.5 L242.7 5.7 L243.2 5.9 L243.7 6.4 L244.2 6.1 L244.7 6.5 L245.2 6.7 L245.7 6.3 L246.2 6.8 L246.7 6.9 L247.2 7.0 L247.7 6.8 L248.2 6.9 L248.7 6.9 L249.2 7.3 L249.7 7.2 L250.2 7.4 L250.7 7.4 L251.2 7.3 L251.7 7.4 L252.2 7.4 L252.7 7.4 L253.2 7.4 L253.7 7.4 L254.2 7.4 L254.7 7.4 L255.2 7.4 L255.7 7.4 L256.2 7.4 L256.7 7.4 L257.2 7.4 L257.7 7.4 L258.2 7.4 L258.7 7.4 L259.2 7.4 L259.7 7.4 L260.2 7.4 L260.7 7.4 L261.2 7.4 L261.7 7.4 L262.2 7.4 L262.7 7.4 L263.2 6.6 L263.7 6.7 L264.2 6.9 L264.7 6.1 L265.2 6.2 L265.7 6.3 L266.2 6.8 L266.7 6.7 L267.2 6.7 L267.7 6.7 L268.2 6.8 L268.7 6.9 L269.2 6.1 L269.7 6.4 L270.2 6.4 L270.7 6.7 L271.2 6.2 L271.7 6.1 L272.2 6.4 L272.7 6.1 L273.2 6.5 L273.7 6.3 L274.2 6.6 L274.7 6.7 L275.2 6.9 L275.7 6.9 L276.2 7.0 L276.7 7.0 L277.2 6.1 L277.7 6.3 L278.2 6.4 L278.7 6.5 L279.2 6.7 L279.7 7.0 L280.2 7.1 L280.7 6.9 L281.2 7.2 L281.7 7.2 L282.2 7.3 L282.7 7.3 L283.2 7.2 L283.7 7.4 L284.2 7.3 L284.7 7.4 L285.2 7.4 L285.7 5.8 L286.2 5.4 L286.7 5.6 L287.2 5.8 L287.7 5.9 L288.2 6.3 L288.7 6.5 L289.2 7.4 L289.7 7.4 L290.2 7.4 L290.7 7.4 L291.2 7.4 L291.7 7.4 L292.2 7.4 L292.7 7.4 L293.2 7.3 L293.7 7.3 L294.2 7.4 L294.7 7.4 L295.2 7.4 L295.7 7.4 L296.2 7.4 L296.7 7.4 L297.2 7.4 L297.7 7.4 L298.2 7.4 L298.7 6.7 L299.2 7.0 L299.7 7.0 L300.2 7.2 L300.7 7.3 L301.2 7.2 L301.7 7.0 L302.2 7.0 L302.7 7.0 L303.2 7.2 L303.7 7.1 L304.2 7.2 L304.7 7.2 L305.2 7.3 L305.7 7.4 L306.2 7.4 L306.7 7.4 L307.2 7.4 L307.7 7.4 L308.2 7.4 L308.7 7.4 L309.2 7.4 L309.7 7.4 L310.2 7.4 L310.7 7.4 L311.2 7.4 L311.7 7.4 L312.2 6.4 L312.7 6.7 L313.2 6.5 L313.7 6.9 L314.2 6.9 L314.7 6.8 L315.2 7.1 L315.7 6.9 L316.2 7.0 L316.7 7.2 L317.2 7.3 L317.7 7.3 L318.2 7.4 L318.7 7.4 L319.2 7.4 L319.7 7.4 L320.2 7.4 L320.7 7.4 L321.2 7.4 L321.7 7.4 L322.2 7.4 L322.7 7.4 L322.7 9.0 L322.2 9.0 L321.7 9.0 L321.2 9.0 L320.7 9.0 L320.2 9.0 L319.7 9.0 L319.2 9.0 L318.7 9.0 L318.2 9.0 L317.7 9.1 L317.2 9.1 L316.7 9.2 L316.2 9.3 L315.7 9.4 L315.2 9.3 L314.7 9.5 L314.2 9.4 L313.7 9.4 L313.2 9.8 L312.7 9.6 L312.2 9.9 L311.7 9.0 L311.2 9.0 L310.7 9.0 L310.2 9.0 L309.7 9.0 L309.2 9.0 L308.7 9.0 L308.2 9.0 L307.7 9.0 L307.2 9.0 L306.7 9.0 L306.2 9.0 L305.7 9.0 L305.2 9.0 L304.7 9.2 L304.2 9.2 L303.7 9.2 L303.2 9.1 L302.7 9.3 L302.2 9.4 L301.7 9.4 L301.2 9.2 L300.7 9.1 L300.2 9.1 L299.7 9.3 L299.2 9.3 L298.7 9.6 L298.2 9.0 L297.7 9.0 L297.2 9.0 L296.7 9.0 L296.2 9.0 L295.7 9.0 L295.2 9.0 L294.7 9.0 L294.2 9.0 L293.7 9.0 L293.2 9.1 L292.7 9.0 L292.2 9.0 L291.7 9.0 L291.2 9.0 L290.7 9.0 L290.2 9.0 L289.7 9.0 L289.2 9.0 L288.7 9.8 L288.2 10.0 L287.7 10.4 L287.2 10.5 L286.7 10.7 L286.2 10.9 L285.7 10.5 L285.2 9.0 L284.7 9.0 L284.2 9.0 L283.7 9.0 L283.2 9.2 L282.7 9.0 L282.2 9.1 L281.7 9.2 L281.2 9.2 L280.7 9.5 L280.2 9.3 L279.7 9.3 L279.2 9.7 L278.7 9.9 L278.2 9.9 L277.7 10.0 L277.2 10.2 L276.7 9.3 L276.2 9.3 L275.7 9.5 L275.2 9.5 L274.7 9.6 L274.2 9.7 L273.7 10.0 L273.2 9.8 L272.7 10.2 L272.2 9.9 L271.7 10.2 L271.2 10.1 L270.7 9.6 L270.2 9.9 L269.7 10.0 L269.2 10.2 L268.7 9.5 L268.2 9.5 L267.7 9.7 L267.2 9.7 L266.7 9.6 L266.2 9.6 L265.7 10.0 L265.2 10.1 L264.7 10.2 L264.2 9.4 L263.7 9.6 L263.2 9.7 L262.7 9.0 L262.2 9.0 L261.7 9.0 L261.2 9.0 L260.7 9.0 L260.2 9.0 L259.7 9.0 L259.2 9.0 L258.7 9.0 L258.2 9.0 L257.7 9.0 L257.2 9.0 L256.7 9.0 L256.2 9.0 L255.7 9.0 L255.2 9.0 L254.7 9.0 L254.2 9.0 L253.7 9.0 L253.2 9.0 L252.7 9.0 L252.2 9.0 L251.7 9.0 L251.2 9.0 L250.7 9.0 L250.2 9.0 L249.7 9.2 L249.2 9.1 L248.7 9.4 L248.2 9.5 L247.7 9.5 L247.2 9.3 L246.7 9.4 L246.2 9.6 L245.7 10.0 L245.2 9.7 L244.7 9.8 L244.2 10.2 L243.7 9.9 L243.2 10.3 L242.7 10.6 L242.2 10.8 L241.6 11.0 L241.1 11.2 L240.6 11.3 L240.1 11.6 L239.6 11.6 L239.1 11.5 L238.6 12.3 L238.1 9.0 L237.6 9.0 L237.1 9.0 L236.6 9.0 L236.1 9.4 L235.6 9.7 L235.1 9.7 L234.6 10.1 L234.1 10.2 L233.6 10.2 L233.1 10.4 L232.6 10.6 L232.1 10.7 L231.6 10.2 L231.1 10.5 L230.6 10.2 L230.1 10.2 L229.6 10.6 L229.1 9.5 L228.6 9.4 L228.1 9.5 L227.6 9.4 L227.1 9.8 L226.6 9.6 L226.1 9.7 L225.6 9.8 L225.1 10.0 L224.6 10.3 L224.1 9.4 L223.6 9.6 L223.1 9.6 L222.6 9.7 L222.1 9.7 L221.6 9.7 L221.1 9.7 L220.6 10.0 L220.1 10.2 L219.6 10.5 L219.1 10.6 L218.6 10.4 L218.1 11.0 L217.6 11.0 L217.1 10.4 L216.6 10.9 L216.1 11.0 L215.6 10.9 L215.1 10.0 L214.6 9.6 L214.1 9.5 L213.6 9.7 L213.1 9.9 L212.6 9.8 L212.1 9.9 L211.6 10.5 L211.1 10.5 L210.6 9.3 L210.1 9.2 L209.6 9.3 L209.1 9.5 L208.6 9.7 L208.1 9.7 L207.6 9.8 L207.1 9.9 L206.6 9.8 L206.1 10.0 L205.6 10.2 L205.1 9.0 L204.6 9.0 L204.1 9.0 L203.6 9.0 L203.1 9.0 L202.6 9.0 L202.1 9.0 L201.6 9.0 L201.1 9.0 L200.6 9.0 L200.1 9.0 L199.6 9.0 L199.1 9.0 L198.6 9.0 L198.1 9.0 L197.6 10.2 L197.1 9.0 L196.6 9.0 L196.1 9.0 L195.6 9.0 L195.1 9.0 L194.6 9.0 L194.1 9.0 L193.6 9.0 L193.1 9.1 L192.6 9.3 L192.1 9.3 L191.6 9.5 L191.1 9.3 L190.6 9.5 L190.1 9.4 L189.6 9.7 L189.1 9.9 L188.6 9.8 L188.1 10.1 L187.6 10.2 L187.1 10.4 L186.6 10.0 L186.1 10.1 L185.6 10.7 L185.1 10.4 L184.6 10.9 L184.1 11.1 L183.6 11.0 L183.1 9.0 L182.6 9.0 L182.1 9.0 L181.6 9.0 L181.1 9.0 L180.6 9.0 L180.1 9.3 L179.6 9.1 L179.1 9.3 L178.6 9.2 L178.1 9.3 L177.6 9.6 L177.1 9.7 L176.6 9.8 L176.1 10.0 L175.6 10.0 L175.1 9.9 L174.6 10.3 L174.1 10.4 L173.6 10.3 L173.1 10.4 L172.6 10.9 L172.1 10.6 L171.6 11.1 L171.1 11.3 L170.6 10.8 L170.1 10.6 L169.6 10.8 L169.1 11.4 L168.6 11.4 L168.1 11.8 L167.6 11.7 L167.1 11.5 L166.6 10.3 L166.1 11.0 L165.6 10.5 L165.1 9.2 L164.6 9.4 L164.1 9.4 L163.6 9.4 L163.1 9.4 L162.6 9.6 L162.1 9.0 L161.6 9.2 L161.1 9.1 L160.6 9.2 L160.1 9.5 L159.6 9.4 L159.1 9.6 L158.6 9.4 L158.1 9.8 L157.6 9.6 L157.1 10.0 L156.6 10.1 L156.1 9.8 L155.6 9.0 L155.1 9.0 L154.6 9.0 L154.1 9.0 L153.6 9.0 L153.1 9.0 L152.6 9.0 L152.1 9.0 L151.6 9.0 L151.1 9.4 L150.6 9.5 L150.1 9.6 L149.6 9.0 L149.1 9.0 L148.6 9.0 L148.1 9.0 L147.6 9.0 L147.1 9.2 L146.6 9.2 L146.1 9.1 L145.6 9.2 L145.1 9.1 L144.6 9.1 L144.1 9.0 L143.6 9.3 L143.1 9.3 L142.6 9.3 L142.1 9.4 L141.6 9.4 L141.1 9.5 L140.6 9.6 L140.1 9.8 L139.6 9.6 L139.1 9.8 L138.6 10.2 L138.1 10.1 L137.6 10.3 L137.1 10.4 L136.6 10.2 L136.1 10.5 L135.6 9.4 L135.1 9.2 L134.6 9.6 L134.1 9.5 L133.6 9.7 L133.1 9.5 L132.6 9.8 L132.1 9.8 L131.6 9.7 L131.1 10.1 L130.6 10.2 L130.1 10.4 L129.6 9.2 L129.1 9.3 L128.6 9.1 L128.1 9.4 L127.6 9.4 L127.1 9.5 L126.6 9.4 L126.1 9.3 L125.6 9.4 L125.1 9.5 L124.6 9.0 L124.1 9.0 L123.6 9.0 L123.1 9.0 L122.6 9.0 L122.1 9.0 L121.6 9.0 L121.1 9.0 L120.6 9.0 L120.1 9.0 L119.6 9.0 L119.1 9.0 L118.6 9.0 L118.1 9.0 L117.6 9.1 L117.1 9.0 L116.6 9.0 L116.1 9.1 L115.6 9.3 L115.1 9.2 L114.6 9.2 L114.1 9.5 L113.6 9.6 L113.1 9.6 L112.6 9.5 L112.1 9.9 L111.6 10.1 L111.1 9.3 L110.6 9.4 L110.1 9.7 L109.6 9.7 L109.1 9.8 L108.6 9.7 L108.1 9.0 L107.6 9.0 L107.1 9.0 L106.6 9.2 L106.1 9.0 L105.6 9.1 L105.1 9.1 L104.6 9.1 L104.1 9.1 L103.6 9.1 L103.1 9.3 L102.6 9.5 L102.1 9.3 L101.6 9.7 L101.1 9.7 L100.6 9.9 L100.1 10.0 L99.6 9.9 L99.1 9.8 L98.6 9.0 L98.1 9.0 L97.6 9.0 L97.1 9.1 L96.6 9.0 L96.1 9.0 L95.6 9.0 L95.1 11.6 L94.6 11.3 L94.1 9.5 L93.6 9.7 L93.1 9.7 L92.6 9.7 L92.1 10.0 L91.6 9.8 L91.1 9.9 L90.6 9.9 L90.1 10.2 L89.6 10.2 L89.1 10.6 L88.6 10.8 L88.1 11.2 L87.6 10.9 L87.1 11.4 L86.6 11.5 L86.1 11.4 L85.6 11.9 L85.1 10.8 L84.6 11.4 L84.1 9.7 L83.6 10.1 L83.1 9.8 L82.6 10.2 L82.1 10.1 L81.6 10.5 L81.1 10.3 L80.5 9.2 L80.0 9.3 L79.5 9.5 L79.0 9.5 L78.5 9.8 L78.0 9.9 L77.5 9.3 L77.0 9.7 L76.5 9.2 L76.0 9.3 L75.5 9.4 L75.0 9.7 L74.5 9.9 L74.0 10.0 L73.5 10.1 L73.0 9.9 L72.5 10.1 L72.0 10.0 L71.5 10.2 L71.0 10.4 L70.5 9.4 L70.0 9.5 L69.5 9.5 L69.0 9.3 L68.5 9.2 L68.0 9.3 L67.5 9.3 L67.0 9.5 L66.5 9.5 L66.0 9.8 L65.5 9.8 L65.0 9.9 L64.5 10.1 L64.0 10.0 L63.5 10.0 L63.0 10.2 L62.5 9.3 L62.0 9.2 L61.5 9.4 L61.0 9.3 L60.5 9.5 L60.0 9.7 L59.5 9.6 L59.0 9.9 L58.5 10.0 L58.0 10.0 L57.5 10.0 L57.0 10.4 L56.5 10.1 L56.0 10.3 L55.5 9.0 L55.0 9.0 L54.5 9.0 L54.0 9.0 L53.5 9.0 L53.0 9.0 L52.5 9.0 L52.0 9.0 L51.5 9.0 L51.0 9.7 L50.5 9.8 L50.0 9.9 L49.5 9.9 L49.0 10.4 L48.5 10.7 L48.0 10.6 L47.5 10.5 L47.0 9.9 L46.5 10.1 L46.0 10.1 L45.5 9.8 L45.0 10.4 L44.5 10.3 L44.0 10.4 L43.5 9.0 L43.0 9.0 L42.5 9.2 L42.0 9.2 L41.5 9.2 L41.0 9.4 L40.5 9.5 L40.0 9.4 L39.5 9.7 L39.0 9.8 L38.5 9.7 L38.0 9.3 L37.5 9.4 L37.0 9.3 L36.5 9.4 L36.0 9.3 L35.5 9.6 L35.0 9.7 L34.5 9.7 L34.0 9.6 L33.5 9.8 L33.0 10.2 L32.5 10.3 L32.0 10.2 L31.5 10.2 L31.0 10.2 L30.5 10.7 L30.0 9.0 L29.5 9.0 L29.0 9.0 L28.5 9.0 L28.0 9.0 L27.5 9.0 L27.0 9.0 L26.5 9.0 L26.0 9.0 L25.5 9.0 L25.0 9.1 L24.5 9.1 L24.0 9.2 L23.5 9.3 L23.0 9.4 L22.5 9.3 L22.0 9.3 L21.5 9.5 L21.0 9.7 L20.5 9.6 L20.0 9.6 L19.5 9.8 L19.0 10.1 L18.5 10.1 L18.0 10.3 L17.5 10.4 L17.0 10.4 L16.5 10.4 L16.0 11.1 L15.5 11.3 L15.0 11.1 L14.5 11.1 L14.0 11.5 L13.5 11.2 L13.0 11.5 L12.5 10.0 L12.0 10.1 L11.5 10.2 L11.0 10.4 L10.5 10.4 L10.0 11.1 L9.5 11.2 L9.0 10.5 L8.5 9.0 L8.0 9.4 L7.5 9.5 L7.0 9.5 L6.5 9.6 L6.0 9.5 L5.5 9.0 L5.0 9.0 L4.5 9.0 L4.0 9.0 L3.5 9.0 L3.0 9.0 L2.5 9.0 L2.0 9.0 L1.5 9.0 L1.0 9.0 L0.5 9.0 L0.0 9.0Z" fill="#a8d998"/></svg>
</div>
<div class="a clip" style="left:677px;top:4px;width:181.7px;height:59px">
<div class="t ct" style="left:5px;top:7.6px"><span>Audio from C922 Pro Stream Webcam</span></div>
<svg class="a" style="left:0;top:22px" width="182" height="16" viewBox="0 0 182 16"><path d="M0.0 6.5 L0.5 6.6 L1.0 5.7 L1.5 6.3 L2.0 5.2 L2.5 5.3 L3.0 5.7 L3.5 5.5 L4.0 5.6 L4.5 5.9 L5.0 6.1 L5.5 6.0 L6.0 6.4 L6.5 6.4 L7.0 6.6 L7.5 6.5 L8.0 6.6 L8.5 6.7 L9.0 7.1 L9.5 7.0 L10.0 6.9 L10.5 7.1 L11.0 7.3 L11.5 7.4 L12.0 7.4 L12.5 7.4 L13.0 7.4 L13.5 7.4 L14.0 7.4 L14.5 7.4 L15.0 7.4 L15.5 7.4 L16.0 7.4 L16.5 7.4 L17.0 7.4 L17.5 7.4 L18.0 7.4 L18.5 7.4 L19.0 7.4 L19.5 7.4 L20.0 7.4 L20.5 7.4 L21.0 7.4 L21.5 7.2 L22.0 7.2 L22.5 5.6 L23.0 5.3 L23.5 5.2 L24.0 5.4 L24.5 5.7 L25.0 5.7 L25.5 5.3 L26.0 5.4 L26.5 6.1 L27.0 5.9 L27.5 6.4 L28.0 6.1 L28.5 6.1 L29.0 5.8 L29.5 5.7 L30.0 6.2 L30.5 6.0 L31.0 6.1 L31.5 6.6 L32.0 6.4 L32.5 6.4 L33.0 6.9 L33.5 6.7 L34.0 6.7 L34.5 6.8 L35.0 7.0 L35.5 7.0 L36.0 6.5 L36.5 6.6 L37.0 6.7 L37.5 6.6 L38.0 6.5 L38.5 6.8 L39.0 6.8 L39.5 7.0 L40.0 6.9 L40.5 7.1 L41.0 7.1 L41.5 6.2 L42.0 6.6 L42.5 6.7 L43.0 6.6 L43.5 6.9 L44.0 7.0 L44.5 6.9 L45.0 6.9 L45.6 7.0 L46.1 7.3 L46.6 7.1 L47.1 7.2 L47.6 7.3 L48.1 7.4 L48.6 7.4 L49.1 7.4 L49.6 7.4 L50.1 7.4 L50.6 7.4 L51.1 7.4 L51.6 7.4 L52.1 7.4 L52.6 7.4 L53.1 7.4 L53.6 6.1 L54.1 6.0 L54.6 6.4 L55.1 6.6 L55.6 6.6 L56.1 6.5 L56.6 6.6 L57.1 6.6 L57.6 6.9 L58.1 5.5 L58.6 5.9 L59.1 5.5 L59.6 5.7 L60.1 5.8 L60.6 6.1 L61.1 6.4 L61.6 6.3 L62.1 6.7 L62.6 6.5 L63.1 6.1 L63.6 5.8 L64.1 5.2 L64.6 5.9 L65.1 6.0 L65.6 6.2 L66.1 5.9 L66.6 6.1 L67.1 6.5 L67.6 6.2 L68.1 6.3 L68.6 6.7 L69.1 6.0 L69.6 6.1 L70.1 6.5 L70.6 6.3 L71.1 6.3 L71.6 6.5 L72.1 5.6 L72.6 5.2 L73.1 5.9 L73.6 5.9 L74.1 5.8 L74.6 6.3 L75.1 6.1 L75.6 6.4 L76.1 6.5 L76.6 6.5 L77.1 6.5 L77.6 6.7 L78.1 6.8 L78.6 7.0 L79.1 6.9 L79.6 5.8 L80.1 5.4 L80.6 5.8 L81.1 6.2 L81.6 6.2 L82.1 6.4 L82.6 6.4 L83.1 6.4 L83.6 6.6 L84.1 6.8 L84.6 6.8 L85.1 6.9 L85.6 6.9 L86.1 6.9 L86.6 7.0 L87.1 7.1 L87.6 7.3 L88.1 7.2 L88.6 7.4 L89.1 7.4 L89.6 7.4 L90.1 7.4 L90.6 7.4 L91.1 7.4 L91.6 7.4 L92.1 7.4 L92.6 7.4 L93.1 7.4 L93.6 7.4 L94.1 5.6 L94.6 7.4 L95.1 7.3 L95.6 7.3 L96.1 5.3 L96.6 5.3 L97.1 5.5 L97.6 6.0 L98.1 5.9 L98.6 6.0 L99.1 6.4 L99.6 6.3 L100.1 6.5 L100.6 6.5 L101.1 6.8 L101.6 6.7 L102.1 6.8 L102.6 7.0 L103.1 7.0 L103.6 7.1 L104.1 7.3 L104.6 7.3 L105.1 7.2 L105.6 7.3 L106.1 7.3 L106.6 7.3 L107.1 7.4 L107.6 7.4 L108.1 7.4 L108.6 7.4 L109.1 7.4 L109.6 7.1 L110.1 7.0 L110.6 7.3 L111.1 7.1 L111.6 7.3 L112.1 7.2 L112.6 7.4 L113.1 7.4 L113.6 7.4 L114.1 5.3 L114.6 5.5 L115.1 5.3 L115.6 5.7 L116.1 6.1 L116.6 6.0 L117.1 5.7 L117.6 5.8 L118.1 6.4 L118.6 6.4 L119.1 6.3 L119.6 6.5 L120.1 6.4 L120.6 6.7 L121.1 6.7 L121.6 6.7 L122.1 6.5 L122.6 6.5 L123.1 6.6 L123.6 6.9 L124.1 6.8 L124.6 6.6 L125.1 6.6 L125.6 6.7 L126.1 6.9 L126.6 7.1 L127.1 6.8 L127.6 7.2 L128.1 7.2 L128.6 7.0 L129.1 7.2 L129.6 7.4 L130.1 7.2 L130.6 7.4 L131.1 7.4 L131.6 7.4 L132.1 7.4 L132.6 7.4 L133.1 6.6 L133.6 6.9 L134.1 6.9 L134.6 7.1 L135.1 7.4 L135.6 7.4 L136.1 5.1 L136.7 4.8 L137.2 4.1 L137.7 5.0 L138.2 4.6 L138.7 4.9 L139.2 5.3 L139.7 5.9 L140.2 5.5 L140.7 6.1 L141.2 5.8 L141.7 5.9 L142.2 6.1 L142.7 6.5 L143.2 6.5 L143.7 6.7 L144.2 6.2 L144.7 6.2 L145.2 5.9 L145.7 6.2 L146.2 6.1 L146.7 6.5 L147.2 5.1 L147.7 4.7 L148.2 5.0 L148.7 5.0 L149.2 5.5 L149.7 5.5 L150.2 5.9 L150.7 5.8 L151.2 5.9 L151.7 5.9 L152.2 6.4 L152.7 6.6 L153.2 6.6 L153.7 6.7 L154.2 6.8 L154.7 6.8 L155.2 6.2 L155.7 6.3 L156.2 6.3 L156.7 6.9 L157.2 6.6 L157.7 7.0 L158.2 6.9 L158.7 6.8 L159.2 7.0 L159.7 7.0 L160.2 7.3 L160.7 5.9 L161.2 5.2 L161.7 5.5 L162.2 5.8 L162.7 5.6 L163.2 5.9 L163.7 6.1 L164.2 6.2 L164.7 6.2 L165.2 6.2 L165.7 6.5 L166.2 6.9 L166.7 6.7 L167.2 6.6 L167.7 6.9 L168.2 7.0 L168.7 6.8 L169.2 7.2 L169.7 7.2 L170.2 5.0 L170.7 5.4 L171.2 5.4 L171.7 5.4 L172.2 6.0 L172.7 6.2 L173.2 6.2 L173.7 6.4 L174.2 6.3 L174.7 6.7 L175.2 6.5 L175.7 6.5 L176.2 6.9 L176.7 6.5 L177.2 6.7 L177.7 6.8 L178.2 7.1 L178.7 7.0 L179.2 7.1 L179.7 7.2 L180.2 6.1 L180.7 6.3 L181.2 6.6 L181.7 6.5 L181.7 9.8 L181.2 9.8 L180.7 10.0 L180.2 10.2 L179.7 9.2 L179.2 9.2 L178.7 9.4 L178.2 9.2 L177.7 9.5 L177.2 9.7 L176.7 9.8 L176.2 9.4 L175.7 9.8 L175.2 9.8 L174.7 9.6 L174.2 10.0 L173.7 9.9 L173.2 10.1 L172.7 10.1 L172.2 10.3 L171.7 10.9 L171.2 10.8 L170.7 10.9 L170.2 11.2 L169.7 9.1 L169.2 9.2 L168.7 9.5 L168.2 9.3 L167.7 9.4 L167.2 9.7 L166.7 9.6 L166.2 9.5 L165.7 9.8 L165.2 10.1 L164.7 10.1 L164.2 10.1 L163.7 10.2 L163.2 10.4 L162.7 10.7 L162.2 10.5 L161.7 10.8 L161.2 11.1 L160.7 10.4 L160.2 9.1 L159.7 9.4 L159.2 9.3 L158.7 9.5 L158.2 9.5 L157.7 9.3 L157.2 9.8 L156.7 9.5 L156.2 10.0 L155.7 10.0 L155.2 10.1 L154.7 9.5 L154.2 9.5 L153.7 9.6 L153.2 9.7 L152.7 9.7 L152.2 9.9 L151.7 10.4 L151.2 10.4 L150.7 10.5 L150.2 10.4 L149.7 10.7 L149.2 10.8 L148.7 11.2 L148.2 11.2 L147.7 11.5 L147.2 11.1 L146.7 9.9 L146.2 10.2 L145.7 10.1 L145.2 10.4 L144.7 10.1 L144.2 10.1 L143.7 9.7 L143.2 9.8 L142.7 9.8 L142.2 10.2 L141.7 10.4 L141.2 10.5 L140.7 10.2 L140.2 10.8 L139.7 10.4 L139.2 10.9 L138.7 11.3 L138.2 11.6 L137.7 11.2 L137.2 12.1 L136.7 11.4 L136.1 11.2 L135.6 9.0 L135.1 9.0 L134.6 9.2 L134.1 9.5 L133.6 9.4 L133.1 9.7 L132.6 9.0 L132.1 9.0 L131.6 9.0 L131.1 9.0 L130.6 9.0 L130.1 9.1 L129.6 9.0 L129.1 9.1 L128.6 9.3 L128.1 9.1 L127.6 9.2 L127.1 9.6 L126.6 9.3 L126.1 9.4 L125.6 9.6 L125.1 9.8 L124.6 9.7 L124.1 9.5 L123.6 9.4 L123.1 9.8 L122.6 9.8 L122.1 9.8 L121.6 9.6 L121.1 9.6 L120.6 9.6 L120.1 9.9 L119.6 9.8 L119.1 10.0 L118.6 9.9 L118.1 9.9 L117.6 10.5 L117.1 10.5 L116.6 10.3 L116.1 10.2 L115.6 10.5 L115.1 11.0 L114.6 10.8 L114.1 10.9 L113.6 9.0 L113.1 9.0 L112.6 9.0 L112.1 9.2 L111.6 9.1 L111.1 9.3 L110.6 9.1 L110.1 9.4 L109.6 9.2 L109.1 9.0 L108.6 9.0 L108.1 9.0 L107.6 9.0 L107.1 9.0 L106.6 9.0 L106.1 9.1 L105.6 9.0 L105.1 9.1 L104.6 9.0 L104.1 9.1 L103.6 9.3 L103.1 9.4 L102.6 9.4 L102.1 9.6 L101.6 9.6 L101.1 9.6 L100.6 9.8 L100.1 9.8 L99.6 10.0 L99.1 9.9 L98.6 10.3 L98.1 10.4 L97.6 10.3 L97.1 10.8 L96.6 10.9 L96.1 10.9 L95.6 9.1 L95.1 9.1 L94.6 9.0 L94.1 10.6 L93.6 9.0 L93.1 9.0 L92.6 9.0 L92.1 9.0 L91.6 9.0 L91.1 9.0 L90.6 9.0 L90.1 9.0 L89.6 9.0 L89.1 9.0 L88.6 9.0 L88.1 9.1 L87.6 9.1 L87.1 9.3 L86.6 9.4 L86.1 9.4 L85.6 9.4 L85.1 9.4 L84.6 9.5 L84.1 9.6 L83.6 9.7 L83.1 9.9 L82.6 9.9 L82.1 10.0 L81.6 10.1 L81.1 10.1 L80.6 10.5 L80.1 10.9 L79.6 10.5 L79.1 9.4 L78.6 9.4 L78.1 9.6 L77.6 9.6 L77.1 9.8 L76.6 9.9 L76.1 9.8 L75.6 9.9 L75.1 10.2 L74.6 10.0 L74.1 10.5 L73.6 10.4 L73.1 10.4 L72.6 11.0 L72.1 10.7 L71.6 9.8 L71.1 10.0 L70.6 10.0 L70.1 9.9 L69.6 10.2 L69.1 10.3 L68.6 9.6 L68.1 10.0 L67.6 10.1 L67.1 9.9 L66.6 10.2 L66.1 10.4 L65.6 10.1 L65.1 10.3 L64.6 10.3 L64.1 11.1 L63.6 10.5 L63.1 10.2 L62.6 9.8 L62.1 9.6 L61.6 10.0 L61.1 9.9 L60.6 10.2 L60.1 10.5 L59.6 10.6 L59.1 10.8 L58.6 10.3 L58.1 10.8 L57.6 9.4 L57.1 9.7 L56.6 9.8 L56.1 9.8 L55.6 9.8 L55.1 9.8 L54.6 9.9 L54.1 10.3 L53.6 10.2 L53.1 9.0 L52.6 9.0 L52.1 9.0 L51.6 9.0 L51.1 9.0 L50.6 9.0 L50.1 9.0 L49.6 9.0 L49.1 9.0 L48.6 9.0 L48.1 9.0 L47.6 9.0 L47.1 9.2 L46.6 9.2 L46.1 9.1 L45.6 9.4 L45.0 9.4 L44.5 9.5 L44.0 9.3 L43.5 9.4 L43.0 9.8 L42.5 9.6 L42.0 9.7 L41.5 10.1 L41.0 9.3 L40.5 9.3 L40.0 9.4 L39.5 9.4 L39.0 9.5 L38.5 9.5 L38.0 9.8 L37.5 9.7 L37.0 9.6 L36.5 9.7 L36.0 9.8 L35.5 9.3 L35.0 9.3 L34.5 9.5 L34.0 9.6 L33.5 9.6 L33.0 9.5 L32.5 9.9 L32.0 10.0 L31.5 9.7 L31.0 10.2 L30.5 10.3 L30.0 10.1 L29.5 10.5 L29.0 10.4 L28.5 10.2 L28.0 10.2 L27.5 9.9 L27.0 10.4 L26.5 10.2 L26.0 10.9 L25.5 11.0 L25.0 10.6 L24.5 10.6 L24.0 10.9 L23.5 11.0 L23.0 11.0 L22.5 10.7 L22.0 9.2 L21.5 9.1 L21.0 9.0 L20.5 9.0 L20.0 9.0 L19.5 9.0 L19.0 9.0 L18.5 9.0 L18.0 9.0 L17.5 9.0 L17.0 9.0 L16.5 9.0 L16.0 9.0 L15.5 9.0 L15.0 9.0 L14.5 9.0 L14.0 9.0 L13.5 9.0 L13.0 9.0 L12.5 9.0 L12.0 9.0 L11.5 9.0 L11.0 9.0 L10.5 9.2 L10.0 9.4 L9.5 9.3 L9.0 9.3 L8.5 9.6 L8.0 9.7 L7.5 9.8 L7.0 9.7 L6.5 9.9 L6.0 9.9 L5.5 10.3 L5.0 10.2 L4.5 10.4 L4.0 10.7 L3.5 10.7 L3.0 10.5 L2.5 10.9 L2.0 11.0 L1.5 10.0 L1.0 10.5 L0.5 9.7 L0.0 9.8Z" fill="#a8d998"/></svg>
</div>
<div class="a clip" style="left:859.5px;top:4px;width:186.2px;height:59px">
<div class="t ct" style="left:5px;top:7.6px"><span>Audio from C922 Pro Stream Webcam</span></div>
<svg class="a" style="left:0;top:22px" width="186" height="16" viewBox="0 0 186 16"><path d="M0.0 7.4 L0.5 7.4 L1.0 7.4 L1.5 7.4 L2.0 6.6 L2.5 6.6 L3.0 6.7 L3.5 6.6 L4.0 6.8 L4.5 7.0 L5.0 7.1 L5.5 7.0 L6.0 7.2 L6.5 7.2 L7.0 7.2 L7.5 5.2 L8.0 5.3 L8.5 5.7 L9.0 5.8 L9.5 5.7 L10.0 5.7 L10.5 6.0 L11.0 6.2 L11.5 6.4 L12.0 6.4 L12.5 6.4 L13.0 6.7 L13.5 6.8 L14.0 6.8 L14.5 6.9 L15.0 7.0 L15.5 7.1 L16.0 6.9 L16.5 7.0 L17.0 7.2 L17.5 7.3 L18.0 7.4 L18.5 7.3 L19.0 7.3 L19.5 7.1 L20.0 6.9 L20.5 7.4 L21.0 7.4 L21.5 5.0 L22.0 5.6 L22.5 5.4 L23.0 5.7 L23.5 5.8 L24.0 5.9 L24.5 6.4 L25.0 6.2 L25.5 6.4 L26.0 6.6 L26.5 5.5 L27.0 5.8 L27.5 5.8 L28.0 5.9 L28.5 6.2 L29.0 6.5 L29.5 6.3 L30.0 6.5 L30.5 6.4 L31.0 6.9 L31.5 5.8 L32.0 5.7 L32.5 6.2 L33.0 6.4 L33.5 6.6 L34.0 6.5 L34.5 6.3 L35.0 6.4 L35.5 6.4 L36.0 6.8 L36.5 6.7 L37.0 6.7 L37.5 7.0 L38.0 6.9 L38.5 7.1 L39.0 7.0 L39.5 7.3 L40.0 6.2 L40.5 6.6 L41.0 6.5 L41.5 6.3 L42.0 6.9 L42.5 6.7 L43.0 6.9 L43.5 6.6 L44.0 5.9 L44.5 6.1 L45.0 6.1 L45.5 6.4 L46.0 6.4 L46.5 5.0 L47.1 5.3 L47.6 5.6 L48.1 5.2 L48.6 5.6 L49.1 5.9 L49.6 5.7 L50.1 5.9 L50.6 5.3 L51.1 5.8 L51.6 5.7 L52.1 5.8 L52.6 6.1 L53.1 6.5 L53.6 6.3 L54.1 6.5 L54.6 6.6 L55.1 6.9 L55.6 6.7 L56.1 6.5 L56.6 6.5 L57.1 6.6 L57.6 6.6 L58.1 6.7 L58.6 6.6 L59.1 4.9 L59.6 5.2 L60.1 5.0 L60.6 5.5 L61.1 5.7 L61.6 5.6 L62.1 5.8 L62.6 6.1 L63.1 6.5 L63.6 6.3 L64.1 6.7 L64.6 6.6 L65.1 6.7 L65.6 4.9 L66.1 5.1 L66.6 5.6 L67.1 5.8 L67.6 5.8 L68.1 5.9 L68.6 6.1 L69.1 6.2 L69.6 6.5 L70.1 6.6 L70.6 6.4 L71.1 6.5 L71.6 6.7 L72.1 6.8 L72.6 6.6 L73.1 6.6 L73.6 6.6 L74.1 6.9 L74.6 6.9 L75.1 6.9 L75.6 7.2 L76.1 7.1 L76.6 7.1 L77.1 6.1 L77.6 6.4 L78.1 6.4 L78.6 6.5 L79.1 6.7 L79.6 6.7 L80.1 6.7 L80.6 6.8 L81.1 7.0 L81.6 7.0 L82.1 7.1 L82.6 7.3 L83.1 7.3 L83.6 5.7 L84.1 5.5 L84.6 5.9 L85.1 5.9 L85.6 5.9 L86.1 6.3 L86.6 6.4 L87.1 6.6 L87.6 6.6 L88.1 6.7 L88.6 6.6 L89.1 6.8 L89.6 6.8 L90.1 6.9 L90.6 7.0 L91.1 7.0 L91.6 7.1 L92.1 7.2 L92.6 7.2 L93.1 5.9 L93.6 6.2 L94.1 7.4 L94.6 7.4 L95.1 7.4 L95.6 6.1 L96.1 6.3 L96.6 6.2 L97.1 6.1 L97.6 6.6 L98.1 6.5 L98.6 6.8 L99.1 6.8 L99.6 6.7 L100.1 5.4 L100.6 6.1 L101.1 5.7 L101.6 5.8 L102.1 6.0 L102.6 6.5 L103.1 6.2 L103.6 6.7 L104.1 6.5 L104.6 6.8 L105.1 6.6 L105.6 6.9 L106.1 6.7 L106.6 7.0 L107.1 7.1 L107.6 7.0 L108.1 7.2 L108.6 7.1 L109.1 7.4 L109.6 7.4 L110.1 7.2 L110.6 7.2 L111.1 7.1 L111.6 7.2 L112.1 7.4 L112.6 7.3 L113.1 7.3 L113.6 7.4 L114.1 7.4 L114.6 7.4 L115.1 5.6 L115.6 6.3 L116.1 5.9 L116.6 6.1 L117.1 6.6 L117.6 6.5 L118.1 6.7 L118.6 6.7 L119.1 6.7 L119.6 6.6 L120.1 6.5 L120.6 6.7 L121.1 6.8 L121.6 6.8 L122.1 7.0 L122.6 6.9 L123.1 7.1 L123.6 7.2 L124.1 7.2 L124.6 7.3 L125.1 7.2 L125.6 7.4 L126.1 7.4 L126.6 7.4 L127.1 7.4 L127.6 7.4 L128.1 7.4 L128.6 7.4 L129.1 7.4 L129.6 7.4 L130.1 7.4 L130.6 7.4 L131.1 7.4 L131.6 6.8 L132.1 6.9 L132.6 6.9 L133.1 7.1 L133.6 7.1 L134.1 7.2 L134.6 6.6 L135.1 6.9 L135.6 6.7 L136.1 7.1 L136.6 6.9 L137.1 7.0 L137.6 7.3 L138.1 7.2 L138.6 7.4 L139.1 7.3 L139.6 7.4 L140.2 7.4 L140.7 7.4 L141.2 7.4 L141.7 7.4 L142.2 7.4 L142.7 6.6 L143.2 6.6 L143.7 6.2 L144.2 6.3 L144.7 6.5 L145.2 6.7 L145.7 6.8 L146.2 4.8 L146.7 5.7 L147.2 5.3 L147.7 5.8 L148.2 5.5 L148.7 5.8 L149.2 5.9 L149.7 6.0 L150.2 6.2 L150.7 6.0 L151.2 5.9 L151.7 6.2 L152.2 4.9 L152.7 4.6 L153.2 4.9 L153.7 5.2 L154.2 5.5 L154.7 5.6 L155.2 5.6 L155.7 5.5 L156.2 5.7 L156.7 6.0 L157.2 6.3 L157.7 6.2 L158.2 6.5 L158.7 5.4 L159.2 5.1 L159.7 5.4 L160.2 5.4 L160.7 5.4 L161.2 5.5 L161.7 5.9 L162.2 6.3 L162.7 6.1 L163.2 6.2 L163.7 6.2 L164.2 4.8 L164.7 5.4 L165.2 5.5 L165.7 5.9 L166.2 5.9 L166.7 6.2 L167.2 5.9 L167.7 6.1 L168.2 6.6 L168.7 6.5 L169.2 6.6 L169.7 7.4 L170.2 7.4 L170.7 5.1 L171.2 5.3 L171.7 5.8 L172.2 6.0 L172.7 4.6 L173.2 4.7 L173.7 5.0 L174.2 5.6 L174.7 5.2 L175.2 5.9 L175.7 5.7 L176.2 5.8 L176.7 6.3 L177.2 6.4 L177.7 6.2 L178.2 6.3 L178.7 6.3 L179.2 5.9 L179.7 5.7 L180.2 6.1 L180.7 6.1 L181.2 6.6 L181.7 6.4 L182.2 6.3 L182.7 7.4 L183.2 4.8 L183.7 4.9 L184.2 5.3 L184.7 5.1 L185.2 5.4 L185.7 5.2 L186.2 5.8 L186.2 10.5 L185.7 11.0 L185.2 10.8 L184.7 11.1 L184.2 11.0 L183.7 11.4 L183.2 11.4 L182.7 9.0 L182.2 10.0 L181.7 9.9 L181.2 9.7 L180.7 10.2 L180.2 10.2 L179.7 10.5 L179.2 10.3 L178.7 10.0 L178.2 10.0 L177.7 10.1 L177.2 9.9 L176.7 10.0 L176.2 10.5 L175.7 10.6 L175.2 10.4 L174.7 11.0 L174.2 10.7 L173.7 11.2 L173.2 11.6 L172.7 11.6 L172.2 10.3 L171.7 10.5 L171.2 10.9 L170.7 11.2 L170.2 9.0 L169.7 9.0 L169.2 9.8 L168.7 9.9 L168.2 9.7 L167.7 10.2 L167.2 10.4 L166.7 10.1 L166.2 10.4 L165.7 10.4 L165.2 10.7 L164.7 10.9 L164.2 11.5 L163.7 10.1 L163.2 10.1 L162.7 10.2 L162.2 10.0 L161.7 10.4 L161.2 10.7 L160.7 10.9 L160.2 10.9 L159.7 10.9 L159.2 11.2 L158.7 10.9 L158.2 9.8 L157.7 10.1 L157.2 10.0 L156.7 10.3 L156.2 10.6 L155.7 10.7 L155.2 10.7 L154.7 10.7 L154.2 10.8 L153.7 11.0 L153.2 11.3 L152.7 11.6 L152.2 11.3 L151.7 10.1 L151.2 10.4 L150.7 10.3 L150.2 10.1 L149.7 10.3 L149.2 10.4 L148.7 10.5 L148.2 10.7 L147.7 10.5 L147.2 11.0 L146.7 10.6 L146.2 11.4 L145.7 9.5 L145.2 9.6 L144.7 9.8 L144.2 10.0 L143.7 10.1 L143.2 9.7 L142.7 9.7 L142.2 9.0 L141.7 9.0 L141.2 9.0 L140.7 9.0 L140.2 9.0 L139.6 9.0 L139.1 9.1 L138.6 9.0 L138.1 9.2 L137.6 9.1 L137.1 9.3 L136.6 9.4 L136.1 9.2 L135.6 9.6 L135.1 9.4 L134.6 9.7 L134.1 9.2 L133.6 9.2 L133.1 9.2 L132.6 9.4 L132.1 9.4 L131.6 9.6 L131.1 9.0 L130.6 9.0 L130.1 9.0 L129.6 9.0 L129.1 9.0 L128.6 9.0 L128.1 9.0 L127.6 9.0 L127.1 9.0 L126.6 9.0 L126.1 9.0 L125.6 9.0 L125.1 9.1 L124.6 9.1 L124.1 9.1 L123.6 9.1 L123.1 9.2 L122.6 9.4 L122.1 9.3 L121.6 9.5 L121.1 9.5 L120.6 9.6 L120.1 9.9 L119.6 9.7 L119.1 9.7 L118.6 9.6 L118.1 9.6 L117.6 9.8 L117.1 9.7 L116.6 10.2 L116.1 10.4 L115.6 10.0 L115.1 10.7 L114.6 9.0 L114.1 9.0 L113.6 9.0 L113.1 9.0 L112.6 9.1 L112.1 9.0 L111.6 9.2 L111.1 9.2 L110.6 9.1 L110.1 9.2 L109.6 9.0 L109.1 9.0 L108.6 9.3 L108.1 9.2 L107.6 9.4 L107.1 9.2 L106.6 9.3 L106.1 9.6 L105.6 9.5 L105.1 9.8 L104.6 9.5 L104.1 9.8 L103.6 9.6 L103.1 10.1 L102.6 9.8 L102.1 10.3 L101.6 10.5 L101.1 10.6 L100.6 10.2 L100.1 10.9 L99.6 9.6 L99.1 9.5 L98.6 9.5 L98.1 9.8 L97.6 9.7 L97.1 10.2 L96.6 10.1 L96.1 10.0 L95.6 10.2 L95.1 9.0 L94.6 9.0 L94.1 9.0 L93.6 10.1 L93.1 10.4 L92.6 9.2 L92.1 9.2 L91.6 9.3 L91.1 9.3 L90.6 9.3 L90.1 9.4 L89.6 9.6 L89.1 9.5 L88.6 9.7 L88.1 9.6 L87.6 9.7 L87.1 9.7 L86.6 9.9 L86.1 10.0 L85.6 10.4 L85.1 10.4 L84.6 10.4 L84.1 10.8 L83.6 10.6 L83.1 9.0 L82.6 9.0 L82.1 9.3 L81.6 9.4 L81.1 9.4 L80.6 9.5 L80.1 9.6 L79.6 9.7 L79.1 9.6 L78.6 9.9 L78.1 9.9 L77.6 9.9 L77.1 10.2 L76.6 9.3 L76.1 9.2 L75.6 9.1 L75.1 9.4 L74.6 9.5 L74.1 9.4 L73.6 9.7 L73.1 9.7 L72.6 9.7 L72.1 9.6 L71.6 9.6 L71.1 9.8 L70.6 9.9 L70.1 9.7 L69.6 9.8 L69.1 10.1 L68.6 10.2 L68.1 10.3 L67.6 10.5 L67.1 10.5 L66.6 10.7 L66.1 11.2 L65.6 11.3 L65.1 9.7 L64.6 9.7 L64.1 9.6 L63.6 10.0 L63.1 9.8 L62.6 10.2 L62.1 10.5 L61.6 10.7 L61.1 10.6 L60.6 10.8 L60.1 11.2 L59.6 11.0 L59.1 11.3 L58.6 9.7 L58.1 9.6 L57.6 9.7 L57.1 9.8 L56.6 9.8 L56.1 9.8 L55.6 9.6 L55.1 9.5 L54.6 9.7 L54.1 9.8 L53.6 10.0 L53.1 9.8 L52.6 10.2 L52.1 10.5 L51.6 10.6 L51.1 10.5 L50.6 11.0 L50.1 10.4 L49.6 10.6 L49.1 10.4 L48.6 10.7 L48.1 11.0 L47.6 10.7 L47.1 11.0 L46.5 11.2 L46.0 9.9 L45.5 9.9 L45.0 10.2 L44.5 10.2 L44.0 10.4 L43.5 9.7 L43.0 9.4 L42.5 9.7 L42.0 9.5 L41.5 10.0 L41.0 9.8 L40.5 9.7 L40.0 10.1 L39.5 9.1 L39.0 9.3 L38.5 9.3 L38.0 9.4 L37.5 9.3 L37.0 9.6 L36.5 9.6 L36.0 9.5 L35.5 9.9 L35.0 9.9 L34.5 10.0 L34.0 9.8 L33.5 9.7 L33.0 9.9 L32.5 10.1 L32.0 10.6 L31.5 10.5 L31.0 9.4 L30.5 9.9 L30.0 9.8 L29.5 10.0 L29.0 9.8 L28.5 10.1 L28.0 10.4 L27.5 10.5 L27.0 10.5 L26.5 10.8 L26.0 9.7 L25.5 9.9 L25.0 10.1 L24.5 9.9 L24.0 10.4 L23.5 10.5 L23.0 10.6 L22.5 10.9 L22.0 10.7 L21.5 11.2 L21.0 9.0 L20.5 9.0 L20.0 9.4 L19.5 9.3 L19.0 9.0 L18.5 9.0 L18.0 9.0 L17.5 9.1 L17.0 9.2 L16.5 9.3 L16.0 9.4 L15.5 9.3 L15.0 9.4 L14.5 9.5 L14.0 9.5 L13.5 9.5 L13.0 9.6 L12.5 9.9 L12.0 9.9 L11.5 9.9 L11.0 10.1 L10.5 10.3 L10.0 10.5 L9.5 10.6 L9.0 10.5 L8.5 10.6 L8.0 11.0 L7.5 11.1 L7.0 9.2 L6.5 9.1 L6.0 9.1 L5.5 9.4 L5.0 9.2 L4.5 9.4 L4.0 9.5 L3.5 9.7 L3.0 9.6 L2.5 9.7 L2.0 9.7 L1.5 9.0 L1.0 9.0 L0.5 9.0 L0.0 9.0Z" fill="#a8d998"/></svg>
</div>
<div class="a clip" style="left:1046.5px;top:4px;width:75.2px;height:59px">
<div class="t ct" style="left:5px;top:7.6px"><span>Audio from C922 Pro Stream Webcam</span></div>
<svg class="a" style="left:0;top:22px" width="75" height="16" viewBox="0 0 75 16"><path d="M0.0 7.4 L0.5 7.4 L1.0 7.4 L1.5 7.4 L2.0 7.4 L2.5 7.4 L3.0 7.4 L3.5 7.4 L4.0 7.4 L4.5 7.4 L5.0 7.4 L5.5 7.4 L6.0 7.4 L6.5 7.4 L7.0 7.4 L7.5 7.4 L8.0 7.0 L8.5 6.0 L9.0 6.2 L9.5 6.4 L10.0 6.3 L10.5 6.5 L11.0 6.6 L11.5 6.0 L12.0 5.8 L12.5 5.8 L13.0 6.5 L13.5 6.5 L14.0 6.6 L14.5 6.6 L15.0 6.8 L15.5 6.7 L16.0 6.9 L16.5 6.9 L17.0 6.9 L17.5 7.0 L18.0 7.1 L18.5 7.2 L19.1 7.2 L19.6 6.3 L20.1 6.5 L20.6 6.5 L21.1 6.8 L21.6 6.5 L22.1 6.6 L22.6 7.0 L23.1 6.9 L23.6 6.9 L24.1 7.2 L24.6 7.1 L25.1 5.9 L25.6 5.7 L26.1 6.0 L26.6 6.4 L27.1 7.4 L27.6 7.4 L28.1 7.4 L28.6 7.4 L29.1 6.3 L29.6 6.2 L30.1 6.3 L30.6 5.9 L31.1 6.1 L31.6 6.0 L32.1 6.0 L32.6 6.1 L33.1 6.3 L33.6 6.5 L34.1 6.5 L34.6 6.8 L35.1 6.9 L35.6 7.0 L36.1 7.1 L36.6 7.1 L37.1 7.4 L37.6 7.4 L38.1 7.4 L38.6 7.4 L39.1 7.4 L39.6 7.4 L40.1 7.3 L40.6 7.3 L41.1 7.4 L41.6 7.4 L42.1 7.4 L42.6 7.4 L43.1 7.4 L43.6 7.4 L44.1 7.4 L44.6 7.4 L45.1 7.4 L45.6 6.9 L46.1 7.0 L46.6 5.5 L47.1 5.9 L47.6 6.1 L48.1 5.8 L48.6 5.7 L49.1 5.9 L49.6 6.0 L50.1 5.8 L50.6 6.1 L51.1 6.1 L51.6 6.5 L52.1 6.5 L52.6 5.4 L53.1 5.1 L53.6 7.4 L54.1 7.4 L54.6 5.5 L55.1 5.7 L55.6 6.0 L56.1 4.6 L56.7 4.9 L57.2 5.3 L57.7 5.4 L58.2 5.8 L58.7 6.2 L59.2 5.8 L59.7 6.2 L60.2 6.2 L60.7 6.4 L61.2 6.5 L61.7 6.5 L62.2 6.7 L62.7 6.7 L63.2 6.8 L63.7 6.8 L64.2 7.0 L64.7 7.0 L65.2 7.3 L65.7 6.7 L66.2 6.9 L66.7 6.9 L67.2 6.8 L67.7 7.0 L68.2 7.1 L68.7 7.2 L69.2 7.3 L69.7 7.4 L70.2 7.2 L70.7 7.4 L71.2 7.4 L71.7 7.4 L72.2 7.4 L72.7 7.4 L73.2 7.4 L73.7 7.4 L74.2 7.4 L74.7 7.4 L75.2 7.4 L75.2 9.0 L74.7 9.0 L74.2 9.0 L73.7 9.0 L73.2 9.0 L72.7 9.0 L72.2 9.0 L71.7 9.0 L71.2 9.0 L70.7 9.0 L70.2 9.1 L69.7 9.0 L69.2 9.1 L68.7 9.2 L68.2 9.2 L67.7 9.4 L67.2 9.5 L66.7 9.5 L66.2 9.5 L65.7 9.6 L65.2 9.1 L64.7 9.4 L64.2 9.3 L63.7 9.5 L63.2 9.5 L62.7 9.6 L62.2 9.6 L61.7 9.8 L61.2 9.8 L60.7 9.9 L60.2 10.1 L59.7 10.1 L59.2 10.5 L58.7 10.1 L58.2 10.5 L57.7 10.9 L57.2 11.0 L56.7 11.3 L56.1 11.6 L55.6 10.3 L55.1 10.6 L54.6 10.7 L54.1 9.0 L53.6 9.0 L53.1 11.2 L52.6 10.9 L52.1 9.8 L51.6 9.8 L51.1 10.2 L50.6 10.2 L50.1 10.5 L49.6 10.3 L49.1 10.4 L48.6 10.6 L48.1 10.5 L47.6 10.2 L47.1 10.4 L46.6 10.8 L46.1 9.3 L45.6 9.4 L45.1 9.0 L44.6 9.0 L44.1 9.0 L43.6 9.0 L43.1 9.0 L42.6 9.0 L42.1 9.0 L41.6 9.0 L41.1 9.0 L40.6 9.0 L40.1 9.0 L39.6 9.0 L39.1 9.0 L38.6 9.0 L38.1 9.0 L37.6 9.0 L37.1 9.0 L36.6 9.2 L36.1 9.2 L35.6 9.3 L35.1 9.5 L34.6 9.5 L34.1 9.8 L33.6 9.8 L33.1 10.0 L32.6 10.2 L32.1 10.3 L31.6 10.3 L31.1 10.2 L30.6 10.3 L30.1 10.0 L29.6 10.1 L29.1 10.0 L28.6 9.0 L28.1 9.0 L27.6 9.0 L27.1 9.0 L26.6 9.9 L26.1 10.3 L25.6 10.6 L25.1 10.4 L24.6 9.2 L24.1 9.2 L23.6 9.4 L23.1 9.4 L22.6 9.3 L22.1 9.7 L21.6 9.8 L21.1 9.5 L20.6 9.8 L20.1 9.8 L19.6 10.0 L19.1 9.2 L18.5 9.2 L18.0 9.2 L17.5 9.3 L17.0 9.4 L16.5 9.5 L16.0 9.4 L15.5 9.6 L15.0 9.6 L14.5 9.7 L14.0 9.7 L13.5 9.8 L13.0 9.8 L12.5 10.5 L12.0 10.4 L11.5 10.3 L11.0 9.7 L10.5 9.8 L10.0 10.1 L9.5 9.9 L9.0 10.1 L8.5 10.3 L8.0 9.4 L7.5 9.0 L7.0 9.0 L6.5 9.0 L6.0 9.0 L5.5 9.0 L5.0 9.0 L4.5 9.0 L4.0 9.0 L3.5 9.0 L3.0 9.0 L2.5 9.0 L2.0 9.0 L1.5 9.0 L1.0 9.0 L0.5 9.0 L0.0 9.0Z" fill="#a8d998"/></svg>
</div>
<div class="a clip" style="left:120.5px;top:75px;width:232.2px;height:59px">
<div class="t ct" style="left:5px;top:7.6px">Screen Recording 01/04/2021</div>
<div class="a" style="left:0;top:24.5px;width:232.2px;height:34.5px;background:#15112b;border-top:1.5px solid #2f2393;border-bottom:1.5px solid #2f2393"></div><div class="a" style="left:35.0px;top:27px;width:9px;height:29px;background:#1a1535"></div><div class="a" style="left:46.5px;top:30px;width:9px;height:1px;background:#26304a;box-shadow:1px 2px 0 #33223f,0 4px 0 #263a42,2px 7px 0 #2a2a48"></div><div class="a" style="left:13.5px;top:27.3px;width:20.0px;height:31.7px;background:#ffffff"></div><div class="a" style="left:95.0px;top:27px;width:9px;height:29px;background:#1a1535"></div><div class="a" style="left:106.5px;top:30px;width:9px;height:1px;background:#26304a;box-shadow:1px 2px 0 #33223f,0 4px 0 #263a42,2px 7px 0 #2a2a48"></div><div class="a" style="left:73.5px;top:27.3px;width:20.0px;height:31.7px;background:#ffffff"></div><div class="a" style="left:155.0px;top:27px;width:9px;height:29px;background:#1a1535"></div><div class="a" style="left:166.5px;top:30px;width:9px;height:1px;background:#26304a;box-shadow:1px 2px 0 #33223f,0 4px 0 #263a42,2px 7px 0 #2a2a48"></div><div class="a" style="left:133.5px;top:27.3px;width:20.0px;height:31.7px;background:#ffffff"></div><div class="a" style="left:193.5px;top:27.3px;width:20.0px;height:31.7px;background:#ffffff"></div>
</div>
<div class="a clip" style="left:353.5px;top:75px;width:322.7px;height:59px">
<div class="t ct" style="left:5px;top:7.6px">Screen Recording 01/04/2021</div>
<div class="a" style="left:0;top:24.5px;width:322.7px;height:34.5px;background:#15112b;border-top:1.5px solid #2f2393;border-bottom:1.5px solid #2f2393"></div><div class="a" style="left:27.0px;top:27px;width:9px;height:29px;background:#1a1535"></div><div class="a" style="left:38.5px;top:30px;width:9px;height:1px;background:#26304a;box-shadow:1px 2px 0 #33223f,0 4px 0 #263a42,2px 7px 0 #2a2a48"></div><div class="a" style="left:5.5px;top:27.3px;width:20.0px;height:31.7px;background:#f9102e"></div><div class="a" style="left:87.0px;top:27px;width:9px;height:29px;background:#1a1535"></div><div class="a" style="left:98.5px;top:30px;width:9px;height:1px;background:#26304a;box-shadow:1px 2px 0 #33223f,0 4px 0 #263a42,2px 7px 0 #2a2a48"></div><div class="a" style="left:65.5px;top:27.3px;width:20.0px;height:31.7px;background:#f9102e"></div><div class="a" style="left:147.0px;top:27px;width:9px;height:29px;background:#1a1535"></div><div class="a" style="left:158.5px;top:30px;width:9px;height:1px;background:#26304a;box-shadow:1px 2px 0 #33223f,0 4px 0 #263a42,2px 7px 0 #2a2a48"></div><div class="a" style="left:125.5px;top:27.3px;width:20.0px;height:31.7px;background:#f9102e"></div><div class="a" style="left:207.0px;top:27px;width:9px;height:29px;background:#1a1535"></div><div class="a" style="left:218.5px;top:30px;width:9px;height:1px;background:#26304a;box-shadow:1px 2px 0 #33223f,0 4px 0 #263a42,2px 7px 0 #2a2a48"></div><div class="a" style="left:185.5px;top:27.3px;width:20.0px;height:31.7px;background:#f9102e"></div><div class="a" style="left:267.0px;top:27px;width:9px;height:29px;background:#1a1535"></div><div class="a" style="left:278.5px;top:30px;width:9px;height:1px;background:#26304a;box-shadow:1px 2px 0 #33223f,0 4px 0 #263a42,2px 7px 0 #2a2a48"></div><div class="a" style="left:245.5px;top:27.3px;width:20.0px;height:31.7px;background:#f9102e"></div><div class="a" style="left:305.5px;top:24.5px;width:17.2px;height:34.5px;background:#272727"></div>
</div>
<div class="a clip" style="left:677px;top:75px;width:181.7px;height:59px">
<div class="t ct" style="left:5px;top:7.6px">Screen Recording 01/04/2021</div>
<div class="a" style="left:0;top:24.5px;width:181.7px;height:34.5px;background:#15112b;border-top:1.5px solid #2f2393;border-bottom:1.5px solid #2f2393"></div><div class="a" style="left:18.3px;top:27px;width:9px;height:29px;background:#1a1535"></div><div class="a" style="left:29.8px;top:30px;width:9px;height:1px;background:#26304a;box-shadow:1px 2px 0 #33223f,0 4px 0 #263a42,2px 7px 0 #2a2a48"></div><div class="a" style="left:0.0px;top:24.5px;width:16.8px;height:34.5px;background:#272727"></div><div class="a" style="left:78.3px;top:27px;width:9px;height:29px;background:#1a1535"></div><div class="a" style="left:89.8px;top:30px;width:9px;height:1px;background:#26304a;box-shadow:1px 2px 0 #33223f,0 4px 0 #263a42,2px 7px 0 #2a2a48"></div><div class="a" style="left:56.8px;top:24.5px;width:20.0px;height:34.5px;background:#272727"></div><div class="a" style="left:138.3px;top:27px;width:9px;height:29px;background:#1a1535"></div><div class="a" style="left:149.8px;top:30px;width:9px;height:1px;background:#26304a;box-shadow:1px 2px 0 #33223f,0 4px 0 #263a42,2px 7px 0 #2a2a48"></div><div class="a" style="left:116.8px;top:24.5px;width:20.0px;height:34.5px;background:#272727"></div><div class="a" style="left:176.8px;top:24.5px;width:4.9px;height:34.5px;background:#272727"></div>
</div>
<div class="a clip" style="left:859.5px;top:75px;width:186.2px;height:59px">
<div class="t ct" style="left:5px;top:7.6px">Screen Recording 01/04/2021</div>
<div class="a" style="left:0;top:24.5px;width:186.2px;height:34.5px;background:#15112b;border-top:1.5px solid #2f2393;border-bottom:1.5px solid #2f2393"></div><div class="a" style="left:44.6px;top:27px;width:9px;height:29px;background:#1a1535"></div><div class="a" style="left:56.1px;top:30px;width:9px;height:1px;background:#26304a;box-shadow:1px 2px 0 #33223f,0 4px 0 #263a42,2px 7px 0 #2a2a48"></div><div class="a" style="left:23.1px;top:24.5px;width:20.0px;height:34.5px;background:#272727"></div><div class="a" style="left:104.6px;top:27px;width:9px;height:29px;background:#1a1535"></div><div class="a" style="left:116.1px;top:30px;width:9px;height:1px;background:#26304a;box-shadow:1px 2px 0 #33223f,0 4px 0 #263a42,2px 7px 0 #2a2a48"></div><div class="a" style="left:83.1px;top:24.5px;width:20.0px;height:34.5px;background:#272727"></div><div class="a" style="left:143.1px;top:24.5px;width:20.0px;height:34.5px;background:#272727"></div>
</div>
<div class="a clip" style="left:1046.5px;top:75px;width:75.2px;height:59px">
<div class="t ct" style="left:5px;top:7.6px">Screen Recording 01/04/2021</div>
<div class="a" style="left:0;top:24.5px;width:75.2px;height:34.5px;background:#15112b;border-top:1.5px solid #2f2393;border-bottom:1.5px solid #2f2393"></div><div class="a" style="left:55.5px;top:24.5px;width:19.7px;height:34.5px;background:#272727"></div>
</div>
<div class="a" style="left:128px;top:-8px;width:2px;height:273px;background:#e0202e"></div>
<div class="a" style="left:128.2px;top:-8px;width:.8px;height:273px;background:#f8505c"></div>
<svg class="a" style="left:122.500px;top:-16.300px" width="13" height="14" preserveAspectRatio="none" viewBox="0 0 14 14"><path d="M3.5 .5h7a3 3 0 0 1 3 3v3.500L7 13.500 .5 7V3.500a3 3 0 0 1 3-3z" fill="#e8111f"/><path d="M3.500 1h7a2.500 2.500 0 0 1 2.500 2.500" stroke="#ff6a70" stroke-width=".8" fill="none"/></svg>
<div class="a" style="left:129px;top:251.5px;width:15.5px;height:13px;border-radius:0 4px 4px 0;background:#e3182a;border:1px solid #ff5d66"></div>
<div class="a" style="left:133px;top:254.5px;width:1.3px;height:7px;background:#4a0a10;box-shadow:2.8px 0 0 #4a0a10,5.6px 0 0 #4a0a10"></div>
</div><!--TRE-->
<div id="bottombar" class="a">
<svg class="a" style="left:12px;top:7.500px" width="13" height="17" viewBox="0 0 13 17"><path d="M.8 .6v13.200l3.200-2.900 2.300 5 2.300-1-2.300-4.900h4.400z" fill="#f4f2f6"/></svg>
<svg class="a" style="left:43px;top:13px" width="9" height="6" viewBox="0 0 9 6"><path d="M1 1l3.500 3.500L8 1" stroke="#e8e8e8" stroke-width="1.400" fill="none"/></svg>
<svg class="a" style="left:69.500px;top:9.500px" width="13" height="13" viewBox="0 0 13 13"><path d="M6.500 .5v12M.5 6.500h12" stroke="#fff" stroke-width="2.100"/></svg>
<svg class="a" style="left:84px;top:13px" width="9" height="6" viewBox="0 0 9 6"><path d="M1 1l3.500 3.500L8 1" stroke="#e8e8e8" stroke-width="1.400" fill="none"/></svg>
<svg class="a" style="left:117px;top:10px" width="12" height="12" viewBox="0 0 12 12"><circle cx="4.800" cy="4.800" r="3.300" stroke="#c4c4c4" stroke-width="1.500" fill="none"/><path d="M7.300 7.300l3.500 3.500" stroke="#c4c4c4" stroke-width="1.800"/></svg>
<div class="a" style="left:134px;top:13.500px;width:160px;height:3.500px;border-radius:2px;background:#424144"></div>
<div class="a" style="left:134px;top:13.500px;width:34px;height:3.500px;border-radius:2px;background:#0a6fee"></div>
<div class="a" style="left:159.500px;top:7.500px;width:16px;height:16px;border-radius:50%;background:#9c9c9c"></div>
<svg class="a" style="left:297px;top:8px" width="15" height="15" viewBox="0 0 15 15"><circle cx="6" cy="6" r="4.500" stroke="#c4c4c4" stroke-width="1.600" fill="none"/><path d="M9.300 9.300l4.500 4.500" stroke="#c4c4c4" stroke-width="2"/></svg>
<div class="t" id="dur" style="left:893px;top:10.200px;font-size:11.600px;color:#e2e2e2;letter-spacing:.020px">Duration: 5 mins 31 secs</div>
</div>
<div class="a" style="left:0;top:1044px;width:6px;height:6px;background:radial-gradient(circle at 100% 0,rgba(0,0,0,0) 5.500px,#000 6.200px)"></div>
<div class="a" style="left:6px;top:1049.200px;width:1605px;height:.8px;background:#4c4c50"></div>
</body></html>
